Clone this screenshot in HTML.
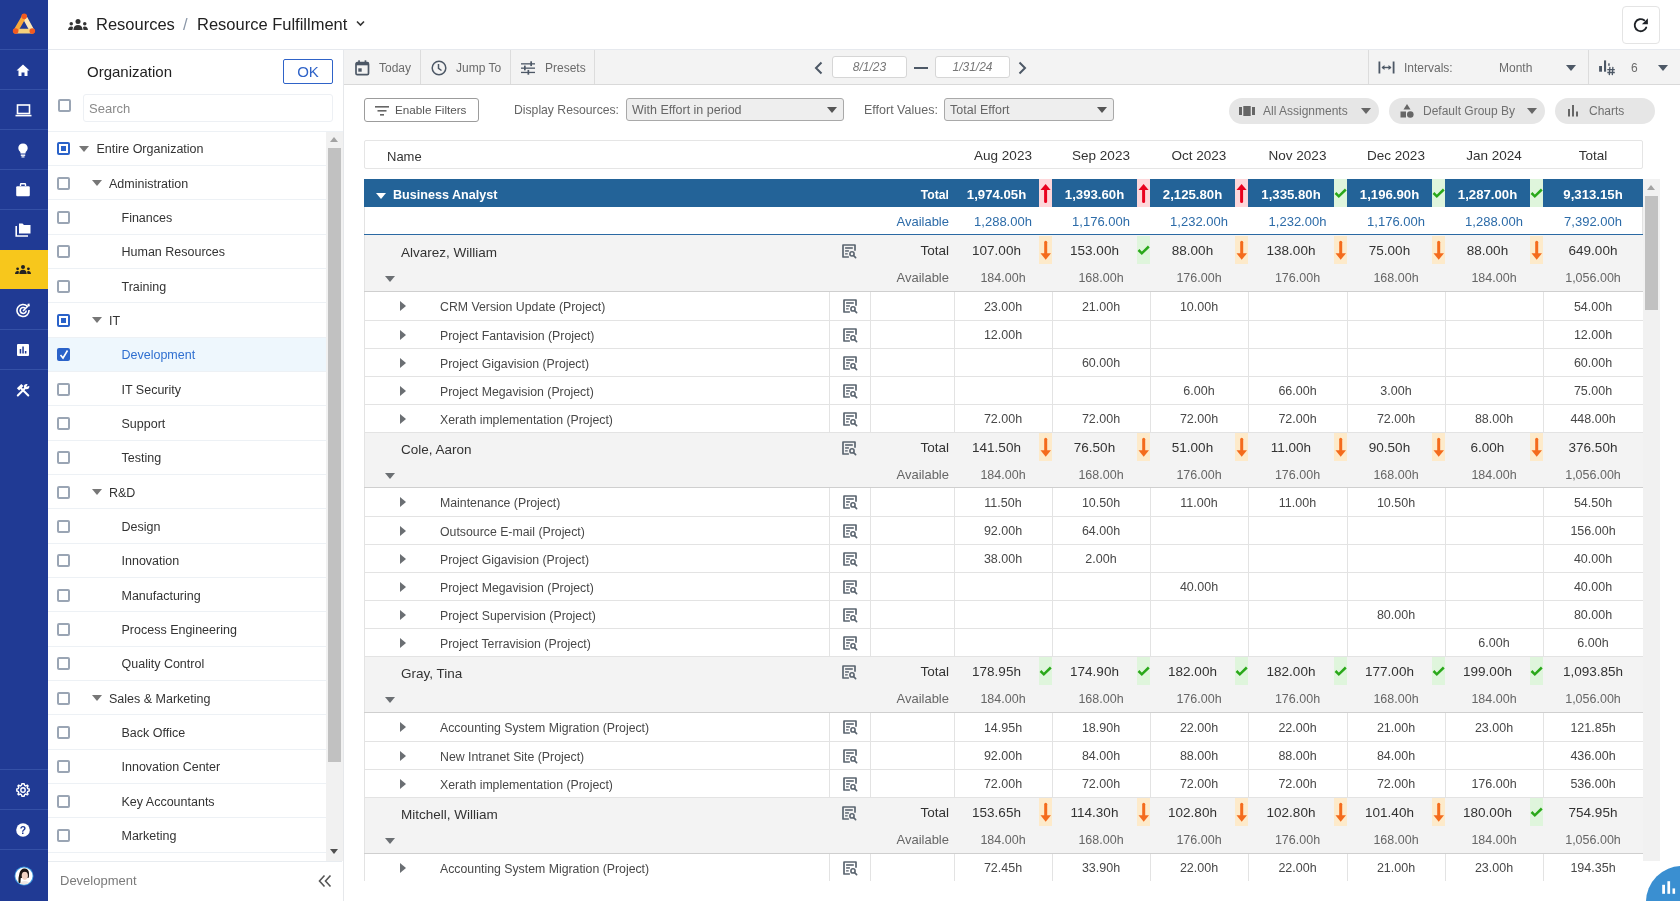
<!DOCTYPE html><html><head><meta charset="utf-8"><style>
*{box-sizing:border-box;margin:0;padding:0}
html,body{width:1680px;height:901px;overflow:hidden;background:#fff;font-family:"Liberation Sans", sans-serif;color:#333}
.a{position:absolute}
.nav{left:0;top:0;width:48px;height:901px;background:#203a94}
.nsep{left:0;width:48px;height:1px;background:#3450a6}
.hdr{left:48px;top:0;width:1632px;height:50px;border-bottom:1px solid #e6e9ee;background:#fff}
.org{left:48px;top:50px;width:296px;height:851px;background:#fff;border-right:1px solid #e6e8eb}
.trow{left:48px;width:278px;height:35px;border-bottom:1px solid #edf1f5}
.cb{width:13px;height:13px;border:2px solid #9aa5b4;border-radius:2px;background:#fff}
.tl{font-size:12.5px;color:#3a3a3a;white-space:nowrap}
.tri{width:0;height:0;border-left:5px solid transparent;border-right:5px solid transparent;border-top:6px solid #777}
.tb{left:344px;top:50px;width:1336px;height:35px;background:#f3f3f3;border-bottom:1px solid #d9d9d9}
.vsep{width:1px;background:#dcdcdc}
.tbt{font-size:12px;color:#6b6b6b;white-space:nowrap}
.cell{white-space:nowrap;text-align:center}
</style></head><body><div id="root" style="position:absolute;left:0;top:0;width:1680px;height:901px;overflow:hidden;background:#fff;will-change:transform"><div class="a nav"></div>
<div class="a nsep" style="top:49px"></div>
<div class="a nsep" style="top:89px"></div>
<div class="a nsep" style="top:129px"></div>
<div class="a nsep" style="top:169px"></div>
<div class="a nsep" style="top:209px"></div>
<div class="a nsep" style="top:329px"></div>
<div class="a nsep" style="top:369px"></div>
<div class="a nsep" style="top:769px"></div>
<div class="a nsep" style="top:809px"></div>
<div class="a nsep" style="top:849px"></div>
<div class="a" style="left:0;top:250px;width:48px;height:39px;background:#f7c71c"></div>
<svg class="a" style="left:12px;top:12px" width="24" height="24" viewBox="0 0 24 24">
<path d="M12.2 4.3 L20.3 19.1" stroke="#fbe7b8" stroke-width="4.6" stroke-linecap="round"/>
<path d="M3.6 19.1 L20.3 19.1" stroke="#f4d07c" stroke-width="4.6" stroke-linecap="round"/>
<path d="M12.2 4.3 L3.6 19.1" stroke="#f8a93a" stroke-width="4.6" stroke-linecap="round"/>
<circle cx="12.2" cy="4.3" r="2.8" fill="#f15a1f"/><circle cx="3.6" cy="19.1" r="2.8" fill="#f15a1f"/><circle cx="20.3" cy="19.1" r="2.8" fill="#f15a1f"/>
</svg>
<svg class="a" style="left:16px;top:64px" width="14" height="13" viewBox="0 0 14 13"><path d="M7 0.5 L13.5 6.5 L11.5 6.5 L11.5 12 L8.5 12 L8.5 8.5 L5.5 8.5 L5.5 12 L2.5 12 L2.5 6.5 L0.5 6.5 Z" fill="#fff"/></svg>
<svg class="a" style="left:15px;top:104px" width="17" height="13" viewBox="0 0 17 13"><rect x="2.5" y="1" width="12" height="8.5" fill="none" stroke="#fff" stroke-width="1.6"/><rect x="0.5" y="10.8" width="16" height="1.6" fill="#fff"/></svg>
<svg class="a" style="left:18px;top:143px" width="10" height="15" viewBox="0 0 10 15"><path d="M5 0.5 C2.2 0.5 0.3 2.6 0.3 5 C0.3 7 1.5 8 2.3 9 L2.5 10.5 L7.5 10.5 L7.7 9 C8.5 8 9.7 7 9.7 5 C9.7 2.6 7.8 0.5 5 0.5 Z" fill="#fff"/><rect x="2.8" y="11.5" width="4.4" height="1.4" fill="#fff"/><rect x="3.5" y="13.3" width="3" height="1.2" fill="#fff"/></svg>
<svg class="a" style="left:16px;top:183px" width="14" height="14" viewBox="0 0 14 14"><path d="M4.5 3 L4.5 1.5 Q4.5 0.8 5.2 0.8 L8.8 0.8 Q9.5 0.8 9.5 1.5 L9.5 3" fill="none" stroke="#fff" stroke-width="1.4"/><rect x="0.2" y="3.2" width="13.6" height="10" rx="1.2" fill="#fff"/></svg>
<svg class="a" style="left:15px;top:223px" width="16" height="14" viewBox="0 0 16 14"><path d="M4 0.5 L7.5 0.5 L9 2 L15.5 2 L15.5 10.5 L4 10.5 Z" fill="#fff"/><path d="M1.2 3 L1.2 13 L13 13" fill="none" stroke="#fff" stroke-width="1.6"/></svg>
<svg class="a" style="left:15px;top:265px" width="16.0" height="9.0" viewBox="0 0 16 9"><circle cx="8" cy="2" r="2" fill="#222"/><path d="M4.3 9 Q4.5 4.8 8 4.8 Q11.5 4.8 11.7 9 Z" fill="#222"/><circle cx="2.6" cy="3.8" r="1.4" fill="#222"/><path d="M0 9 Q0.2 6 2.6 6 Q3.8 6 4 6.8 L3.5 9 Z" fill="#222"/><circle cx="13.4" cy="3.8" r="1.4" fill="#222"/><path d="M16 9 Q15.8 6 13.4 6 Q12.2 6 12 6.8 L12.5 9 Z" fill="#222"/></svg>
<svg class="a" style="left:16px;top:303px" width="15" height="15" viewBox="0 0 15 15"><path d="M11.5 3.5 A6 6 0 1 0 13 7" fill="none" stroke="#fff" stroke-width="1.6"/><path d="M9.3 5.3 A3 3 0 1 0 10.2 7.5" fill="none" stroke="#fff" stroke-width="1.6"/><path d="M7 8 L13 2" stroke="#fff" stroke-width="1.6"/><path d="M11 1 L13.5 0.5 L13.8 3.8 Z" fill="#fff"/></svg>
<svg class="a" style="left:17px;top:344px" width="12" height="12" viewBox="0 0 12 12"><rect x="0" y="0" width="12" height="12" rx="1" fill="#fff"/><rect x="2.7" y="5" width="1.5" height="4.5" fill="#203a94"/><rect x="5.3" y="2.5" width="1.5" height="7" fill="#203a94"/><rect x="7.9" y="7" width="1.5" height="2.5" fill="#203a94"/></svg>
<svg class="a" style="left:16px;top:383px" width="14" height="14" viewBox="0 0 14 14"><path d="M1.8 12.5 L9.5 4.8" stroke="#fff" stroke-width="2" stroke-linecap="round"/><circle cx="10.6" cy="3.6" r="2.7" fill="#fff"/><path d="M10.2 3.9 L12.5 -0.5 L15 2 Z" fill="#203a94"/><path d="M12.3 12.5 L5 5.2" stroke="#fff" stroke-width="2" stroke-linecap="round"/><path d="M5.3 0.9 L7.5 3.1 L3.1 7.5 L0.9 5.3 Z" fill="#fff"/></svg>
<svg class="a" style="left:16px;top:783px" width="14" height="14" viewBox="0 0 14 14"><path d="M7 0.8 L8.2 0.8 L8.6 2.4 L9.9 3 L11.3 2.1 L12.1 2.9 L11.2 4.3 L11.8 5.6 L13.2 6 L13.2 8 L11.8 8.4 L11.2 9.7 L12.1 11.1 L11.3 11.9 L9.9 11 L8.6 11.6 L8.2 13.2 L5.8 13.2 L5.4 11.6 L4.1 11 L2.7 11.9 L1.9 11.1 L2.8 9.7 L2.2 8.4 L0.8 8 L0.8 6 L2.2 5.6 L2.8 4.3 L1.9 2.9 L2.7 2.1 L4.1 3 L5.4 2.4 L5.8 0.8 Z" fill="none" stroke="#fff" stroke-width="1.4" stroke-linejoin="round"/><circle cx="7" cy="7" r="2.2" fill="none" stroke="#fff" stroke-width="1.4"/></svg>
<svg class="a" style="left:16px;top:823px" width="14" height="14" viewBox="0 0 14 14"><circle cx="7" cy="7" r="6.8" fill="#fff"/><text x="7" y="11" text-anchor="middle" font-family="Liberation Sans" font-weight="bold" font-size="10.5" fill="#203a94">?</text></svg>
<svg class="a" style="left:14px;top:866px" width="20" height="20" viewBox="0 0 20 20"><defs><clipPath id="avc"><circle cx="10" cy="10" r="8.6"/></clipPath></defs><circle cx="10" cy="10" r="9.5" fill="#3d9ae0"/><circle cx="10" cy="10" r="8.6" fill="#fff"/><g clip-path="url(#avc)"><path d="M4.5 17 Q4 12 5.5 7 Q7 2.3 10.5 2.5 Q14.5 2.7 15 7 Q15.3 10 14.5 12 L6.8 12 Q6.5 15 6.5 17 Z" fill="#1d1816"/><ellipse cx="10.8" cy="9.8" rx="3.1" ry="4.1" fill="#f1d3c2"/><path d="M7.2 6.5 Q10 4 14 6.5 Q12 4.6 10.5 4.6 Q8.3 4.6 7.2 6.5 Z" fill="#1d1816"/><path d="M5 20 Q6 15 10.8 15 Q15.5 15 16.5 20 Z" fill="#efe7e2"/></g></svg>
<div class="a hdr"></div>
<svg class="a" style="left:68px;top:19px" width="20.0" height="11.25" viewBox="0 0 16 9"><circle cx="8" cy="2" r="2" fill="#333"/><path d="M4.3 9 Q4.5 4.8 8 4.8 Q11.5 4.8 11.7 9 Z" fill="#333"/><circle cx="2.6" cy="3.8" r="1.4" fill="#333"/><path d="M0 9 Q0.2 6 2.6 6 Q3.8 6 4 6.8 L3.5 9 Z" fill="#333"/><circle cx="13.4" cy="3.8" r="1.4" fill="#333"/><path d="M16 9 Q15.8 6 13.4 6 Q12.2 6 12 6.8 L12.5 9 Z" fill="#333"/></svg>
<div class="a" style="left:96px;top:15px;font-size:16.5px;color:#222;white-space:nowrap">Resources</div>
<div class="a" style="left:183px;top:15px;font-size:16.5px;color:#8b97a8">/</div>
<div class="a" style="left:197px;top:15px;font-size:16.5px;color:#222;white-space:nowrap">Resource Fulfillment</div>
<svg class="a" style="left:356px;top:20px" width="9" height="7" viewBox="0 0 9 7"><path d="M1 1.5 L4.5 5 L8 1.5" fill="none" stroke="#333" stroke-width="1.6"/></svg>
<div class="a" style="left:1622px;top:6px;width:38px;height:38px;border:1px solid #e4e4e4;border-radius:4px;background:#fff"></div>
<svg class="a" style="left:1632px;top:16px" width="18" height="18" viewBox="0 0 18 18"><path d="M12.2 4.3 A6 6 0 1 0 14.2 11.6" fill="none" stroke="#1f2328" stroke-width="1.9" stroke-linecap="round"/><path d="M15.9 2.3 L15.9 8.3 L9.9 8.3 Z" fill="#1f2328"/></svg>
<div class="a org"></div>
<div class="a" style="left:87px;top:63px;font-size:15px;color:#222;white-space:nowrap">Organization</div>
<div class="a" style="left:283px;top:59px;width:50px;height:25px;border:1px solid #2f63c8;border-radius:2px;color:#2f63c8;font-size:15px;text-align:center;line-height:23px">OK</div>
<div class="a cb" style="left:58px;top:99px"></div>
<div class="a" style="left:83px;top:94px;width:250px;height:28px;border:1px solid #edf0f4;border-radius:3px"></div>
<div class="a" style="left:89px;top:101px;font-size:13px;color:#8a8a8a">Search</div>
<div class="a" style="left:48px;top:131px;width:295px;height:1px;background:#edf1f5"></div>
<div class="a" style="left:48px;top:131.50px;width:278px;height:34.35px;background:#fff;border-bottom:1px solid #edf1f5"></div>
<div class="a" style="left:57px;top:142.18px;width:13px;height:13px;border:2px solid #2a62c9;border-radius:2px;background:#fff"><div style="position:absolute;left:2px;top:2px;width:5px;height:5px;background:#2a62c9"></div></div>
<div class="a tri" style="left:79px;top:145.68px;border-top-color:#777"></div>
<div class="a tl" style="left:96.5px;top:141.18px;line-height:16px;color:#333">Entire Organization</div>
<div class="a" style="left:48px;top:165.85px;width:278px;height:34.35px;background:#fff;border-bottom:1px solid #edf1f5"></div>
<div class="a cb" style="left:57px;top:176.53px"></div>
<div class="a tri" style="left:92px;top:180.03px;border-top-color:#777"></div>
<div class="a tl" style="left:109px;top:175.53px;line-height:16px;color:#333">Administration</div>
<div class="a" style="left:48px;top:200.20px;width:278px;height:34.35px;background:#fff;border-bottom:1px solid #edf1f5"></div>
<div class="a cb" style="left:57px;top:210.88px"></div>
<div class="a tl" style="left:121.5px;top:209.88px;line-height:16px;color:#333">Finances</div>
<div class="a" style="left:48px;top:234.55px;width:278px;height:34.35px;background:#fff;border-bottom:1px solid #edf1f5"></div>
<div class="a cb" style="left:57px;top:245.23px"></div>
<div class="a tl" style="left:121.5px;top:244.23px;line-height:16px;color:#333">Human Resources</div>
<div class="a" style="left:48px;top:268.90px;width:278px;height:34.35px;background:#fff;border-bottom:1px solid #edf1f5"></div>
<div class="a cb" style="left:57px;top:279.57px"></div>
<div class="a tl" style="left:121.5px;top:278.57px;line-height:16px;color:#333">Training</div>
<div class="a" style="left:48px;top:303.25px;width:278px;height:34.35px;background:#fff;border-bottom:1px solid #edf1f5"></div>
<div class="a" style="left:57px;top:313.93px;width:13px;height:13px;border:2px solid #2a62c9;border-radius:2px;background:#fff"><div style="position:absolute;left:2px;top:2px;width:5px;height:5px;background:#2a62c9"></div></div>
<div class="a tri" style="left:92px;top:317.43px;border-top-color:#777"></div>
<div class="a tl" style="left:109px;top:312.93px;line-height:16px;color:#333">IT</div>
<div class="a" style="left:48px;top:337.60px;width:278px;height:34.35px;background:#eef7fd;border-bottom:1px solid #edf1f5"></div>
<div class="a" style="left:57px;top:348.28px;width:13px;height:13px;border-radius:2px;background:#2a62c9"><svg style="position:absolute;left:2px;top:1px" width="10" height="11" viewBox="0 0 10 11"><path d="M1.5 6 L4 9 L8.5 1.5" fill="none" stroke="#fff" stroke-width="1.6"/></svg></div>
<div class="a tl" style="left:121.5px;top:347.28px;line-height:16px;color:#2f6fd0">Development</div>
<div class="a" style="left:48px;top:371.95px;width:278px;height:34.35px;background:#fff;border-bottom:1px solid #edf1f5"></div>
<div class="a cb" style="left:57px;top:382.63px"></div>
<div class="a tl" style="left:121.5px;top:381.63px;line-height:16px;color:#333">IT Security</div>
<div class="a" style="left:48px;top:406.30px;width:278px;height:34.35px;background:#fff;border-bottom:1px solid #edf1f5"></div>
<div class="a cb" style="left:57px;top:416.98px"></div>
<div class="a tl" style="left:121.5px;top:415.98px;line-height:16px;color:#333">Support</div>
<div class="a" style="left:48px;top:440.65px;width:278px;height:34.35px;background:#fff;border-bottom:1px solid #edf1f5"></div>
<div class="a cb" style="left:57px;top:451.33px"></div>
<div class="a tl" style="left:121.5px;top:450.33px;line-height:16px;color:#333">Testing</div>
<div class="a" style="left:48px;top:475.00px;width:278px;height:34.35px;background:#fff;border-bottom:1px solid #edf1f5"></div>
<div class="a cb" style="left:57px;top:485.68px"></div>
<div class="a tri" style="left:92px;top:489.18px;border-top-color:#777"></div>
<div class="a tl" style="left:109px;top:484.68px;line-height:16px;color:#333">R&amp;D</div>
<div class="a" style="left:48px;top:509.35px;width:278px;height:34.35px;background:#fff;border-bottom:1px solid #edf1f5"></div>
<div class="a cb" style="left:57px;top:520.02px"></div>
<div class="a tl" style="left:121.5px;top:519.02px;line-height:16px;color:#333">Design</div>
<div class="a" style="left:48px;top:543.70px;width:278px;height:34.35px;background:#fff;border-bottom:1px solid #edf1f5"></div>
<div class="a cb" style="left:57px;top:554.38px"></div>
<div class="a tl" style="left:121.5px;top:553.38px;line-height:16px;color:#333">Innovation</div>
<div class="a" style="left:48px;top:578.05px;width:278px;height:34.35px;background:#fff;border-bottom:1px solid #edf1f5"></div>
<div class="a cb" style="left:57px;top:588.72px"></div>
<div class="a tl" style="left:121.5px;top:587.72px;line-height:16px;color:#333">Manufacturing</div>
<div class="a" style="left:48px;top:612.40px;width:278px;height:34.35px;background:#fff;border-bottom:1px solid #edf1f5"></div>
<div class="a cb" style="left:57px;top:623.08px"></div>
<div class="a tl" style="left:121.5px;top:622.08px;line-height:16px;color:#333">Process Engineering</div>
<div class="a" style="left:48px;top:646.75px;width:278px;height:34.35px;background:#fff;border-bottom:1px solid #edf1f5"></div>
<div class="a cb" style="left:57px;top:657.42px"></div>
<div class="a tl" style="left:121.5px;top:656.42px;line-height:16px;color:#333">Quality Control</div>
<div class="a" style="left:48px;top:681.10px;width:278px;height:34.35px;background:#fff;border-bottom:1px solid #edf1f5"></div>
<div class="a cb" style="left:57px;top:691.77px"></div>
<div class="a tri" style="left:92px;top:695.27px;border-top-color:#777"></div>
<div class="a tl" style="left:109px;top:690.77px;line-height:16px;color:#333">Sales &amp; Marketing</div>
<div class="a" style="left:48px;top:715.45px;width:278px;height:34.35px;background:#fff;border-bottom:1px solid #edf1f5"></div>
<div class="a cb" style="left:57px;top:726.12px"></div>
<div class="a tl" style="left:121.5px;top:725.12px;line-height:16px;color:#333">Back Office</div>
<div class="a" style="left:48px;top:749.80px;width:278px;height:34.35px;background:#fff;border-bottom:1px solid #edf1f5"></div>
<div class="a cb" style="left:57px;top:760.48px"></div>
<div class="a tl" style="left:121.5px;top:759.48px;line-height:16px;color:#333">Innovation Center</div>
<div class="a" style="left:48px;top:784.15px;width:278px;height:34.35px;background:#fff;border-bottom:1px solid #edf1f5"></div>
<div class="a cb" style="left:57px;top:794.82px"></div>
<div class="a tl" style="left:121.5px;top:793.82px;line-height:16px;color:#333">Key Accountants</div>
<div class="a" style="left:48px;top:818.50px;width:278px;height:34.35px;background:#fff;border-bottom:1px solid #edf1f5"></div>
<div class="a cb" style="left:57px;top:829.17px"></div>
<div class="a tl" style="left:121.5px;top:828.17px;line-height:16px;color:#333">Marketing</div>
<div class="a" style="left:48px;top:852.85px;width:278px;height:34.35px;background:#fff;border-bottom:1px solid #edf1f5"></div>
<div class="a" style="left:326px;top:132px;width:17px;height:729px;background:#f1f1f1"></div>
<div class="a" style="left:328px;top:148px;width:13px;height:614px;background:#c1c1c1"></div>
<div class="a" style="left:330px;top:137px;width:0;height:0;border-left:4.5px solid transparent;border-right:4.5px solid transparent;border-bottom:5px solid #a3a3a3"></div>
<div class="a" style="left:330px;top:849px;width:0;height:0;border-left:4.5px solid transparent;border-right:4.5px solid transparent;border-top:5px solid #505050"></div>
<div class="a" style="left:48px;top:861px;width:294px;height:40px;background:#fff;border-top:1px solid #e8ecf0"></div>
<div class="a" style="left:60px;top:873px;font-size:13px;color:#7a7a7a">Development</div>
<svg class="a" style="left:318px;top:874px" width="14" height="14" viewBox="0 0 14 14"><path d="M6.5 1.5 L1.5 7 L6.5 12.5 M12.5 1.5 L7.5 7 L12.5 12.5" fill="none" stroke="#555" stroke-width="1.6"/></svg>
<div class="a tb"></div>
<div class="a vsep" style="left:420px;top:50px;height:34px"></div>
<div class="a vsep" style="left:510px;top:50px;height:34px"></div>
<div class="a vsep" style="left:594px;top:50px;height:34px"></div>
<div class="a vsep" style="left:1368px;top:50px;height:34px"></div>
<div class="a vsep" style="left:1588px;top:50px;height:34px"></div>
<svg class="a" style="left:355px;top:60px" width="15" height="16" viewBox="0 0 15 16"><rect x="1" y="2.7" width="12.5" height="12" rx="1.3" fill="none" stroke="#4d5866" stroke-width="1.7"/><rect x="1" y="2.7" width="12.5" height="2.6" fill="#4d5866"/><rect x="3.2" y="0.3" width="1.7" height="3" fill="#4d5866"/><rect x="9.6" y="0.3" width="1.7" height="3" fill="#4d5866"/><rect x="3.3" y="8.3" width="3.4" height="3.4" fill="#4d5866"/></svg>
<div class="a tbt" style="left:379px;top:61px">Today</div>
<svg class="a" style="left:431px;top:60px" width="16" height="16" viewBox="0 0 16 16"><circle cx="8" cy="8" r="6.8" fill="none" stroke="#4d5866" stroke-width="1.5"/><path d="M7.5 4 L7.5 8.3 L10.5 10.5" fill="none" stroke="#4d5866" stroke-width="1.5"/></svg>
<div class="a tbt" style="left:456px;top:61px">Jump To</div>
<svg class="a" style="left:521px;top:61px" width="15" height="14" viewBox="0 0 15 14"><rect x="0" y="2.2" width="14" height="1.3" fill="#4d5866"/><rect x="0" y="6.5" width="14" height="1.3" fill="#4d5866"/><rect x="0" y="10.8" width="14" height="1.3" fill="#4d5866"/><rect x="9.3" y="0.3" width="1.7" height="4.8" fill="#4d5866"/><rect x="3" y="4.6" width="1.7" height="4.8" fill="#4d5866"/><rect x="6.5" y="8.9" width="1.7" height="4.8" fill="#4d5866"/></svg>
<div class="a tbt" style="left:545px;top:61px">Presets</div>
<svg class="a" style="left:813px;top:61px" width="11" height="14" viewBox="0 0 11 14"><path d="M8.5 1.5 L3 7 L8.5 12.5" fill="none" stroke="#4d5866" stroke-width="2"/></svg>
<div class="a" style="left:832px;top:56px;width:75px;height:22px;background:#fff;border:1px solid #d6d6d6;border-radius:3px;font-size:12px;font-style:italic;color:#777;text-align:center;line-height:20px">8/1/23</div>
<div class="a" style="left:914px;top:67px;width:14px;height:2px;background:#4d5866"></div>
<div class="a" style="left:935px;top:56px;width:75px;height:22px;background:#fff;border:1px solid #d6d6d6;border-radius:3px;font-size:12px;font-style:italic;color:#777;text-align:center;line-height:20px">1/31/24</div>
<svg class="a" style="left:1017px;top:61px" width="11" height="14" viewBox="0 0 11 14"><path d="M2.5 1.5 L8 7 L2.5 12.5" fill="none" stroke="#4d5866" stroke-width="2"/></svg>
<svg class="a" style="left:1378px;top:61px" width="17" height="13" viewBox="0 0 17 13"><rect x="0.5" y="0.5" width="1.8" height="12" fill="#4d5866"/><rect x="14.7" y="0.5" width="1.8" height="12" fill="#4d5866"/><path d="M4 6.5 L13 6.5" stroke="#4d5866" stroke-width="1.4"/><path d="M3.5 6.5 L6.5 4 L6.5 9 Z M13.5 6.5 L10.5 4 L10.5 9 Z" fill="#4d5866"/></svg>
<div class="a tbt" style="left:1404px;top:61px">Intervals:</div>
<div class="a tbt" style="left:1499px;top:61px">Month</div>
<div class="a tri" style="left:1566px;top:65px;border-top-color:#4d5866"></div>
<svg class="a" style="left:1598px;top:60px" width="18" height="16" viewBox="0 0 18 16"><rect x="1.1" y="6" width="2.9" height="5.7" fill="#4d5866"/><rect x="6" y="0.4" width="2.1" height="11.3" fill="#4d5866"/><rect x="10.2" y="3.3" width="1.5" height="2.5" fill="#4d5866"/><path d="M9.3 9.7 L16.8 9.7 M9.3 12.5 L16.8 12.5 M11.9 6.9 L11.3 15.1 M14.9 6.9 L14.3 15.1" stroke="#4d5866" stroke-width="1.3"/></svg>
<div class="a tbt" style="left:1631px;top:61px">6</div>
<div class="a tri" style="left:1658px;top:65px;border-top-color:#4d5866"></div>
<div class="a" style="left:364px;top:98px;width:115px;height:24px;border:1px solid #9c9c9c;border-radius:3px;background:#fff"></div>
<svg class="a" style="left:375px;top:106px" width="14" height="10" viewBox="0 0 14 10"><rect x="0" y="0" width="14" height="1.6" fill="#666"/><rect x="2.5" y="4" width="9" height="1.6" fill="#666"/><rect x="5" y="8" width="4" height="1.6" fill="#666"/></svg>
<div class="a" style="left:395px;top:103px;font-size:11.7px;color:#555;white-space:nowrap">Enable Filters</div>
<div class="a" style="left:514px;top:103px;font-size:12.2px;color:#666;white-space:nowrap">Display Resources:</div>
<div class="a" style="left:626px;top:98px;width:218px;height:23px;border:1px solid #a9a9a9;border-radius:3px;background:#eeeeee"></div>
<div class="a" style="left:632px;top:103px;font-size:12.5px;color:#666;white-space:nowrap">With Effort in period</div>
<div class="a tri" style="left:827px;top:107px;border-top-color:#555"></div>
<div class="a" style="left:864px;top:103px;font-size:12.5px;color:#666;white-space:nowrap">Effort Values:</div>
<div class="a" style="left:944px;top:98px;width:170px;height:23px;border:1px solid #a9a9a9;border-radius:3px;background:#eeeeee"></div>
<div class="a" style="left:950px;top:103px;font-size:12.5px;color:#666;white-space:nowrap">Total Effort</div>
<div class="a tri" style="left:1097px;top:107px;border-top-color:#555"></div>
<div class="a" style="left:1229px;top:98px;width:150px;height:26px;border-radius:13px;background:#e6e6e6"></div>
<div class="a" style="left:1263px;top:104px;font-size:12px;color:#707070;white-space:nowrap">All Assignments</div>
<div class="a tri" style="left:1361px;top:108px;border-top-color:#666"></div>
<svg class="a" style="left:1239px;top:106px" width="16" height="10" viewBox="0 0 16 10"><rect x="0" y="1" width="3" height="8" fill="#666"/><rect x="4.3" y="0" width="7.4" height="10" fill="#666"/><rect x="13" y="1" width="3" height="8" fill="#666"/></svg>
<div class="a" style="left:1389px;top:98px;width:156px;height:26px;border-radius:13px;background:#e6e6e6"></div>
<div class="a" style="left:1423px;top:104px;font-size:12px;color:#707070;white-space:nowrap">Default Group By</div>
<div class="a tri" style="left:1527px;top:108px;border-top-color:#666"></div>
<svg class="a" style="left:1400px;top:104px" width="14" height="14" viewBox="0 0 14 14"><path d="M7 0 L10.5 5.5 L3.5 5.5 Z" fill="#666"/><rect x="0.5" y="7.5" width="5.5" height="6" fill="#666"/><circle cx="10.3" cy="10.5" r="3.3" fill="#666"/></svg>
<div class="a" style="left:1555px;top:98px;width:100px;height:26px;border-radius:13px;background:#e6e6e6"></div>
<div class="a" style="left:1589px;top:104px;font-size:12px;color:#707070;white-space:nowrap">Charts</div>
<svg class="a" style="left:1568px;top:105px" width="11" height="12" viewBox="0 0 11 12"><rect x="0" y="4" width="2" height="7.5" fill="#666"/><rect x="4" y="0" width="2" height="11.5" fill="#666"/><rect x="8" y="6.5" width="2" height="5" fill="#666"/></svg>
<div class="a" style="left:364px;top:140px;width:1279px;height:29px;border:1px solid #e5e5e5;border-radius:2px;background:#fff"></div>
<div class="a" style="left:387px;top:149px;font-size:13px;color:#333">Name</div>
<div class="a cell" style="left:954px;top:148px;width:98px;font-size:13.5px;color:#333">Aug 2023</div>
<div class="a cell" style="left:1052px;top:148px;width:98px;font-size:13.5px;color:#333">Sep 2023</div>
<div class="a cell" style="left:1150px;top:148px;width:98px;font-size:13.5px;color:#333">Oct 2023</div>
<div class="a cell" style="left:1248px;top:148px;width:99px;font-size:13.5px;color:#333">Nov 2023</div>
<div class="a cell" style="left:1347px;top:148px;width:98px;font-size:13.5px;color:#333">Dec 2023</div>
<div class="a cell" style="left:1445px;top:148px;width:98px;font-size:13.5px;color:#333">Jan 2024</div>
<div class="a cell" style="left:1543px;top:148px;width:100px;font-size:13.5px;color:#333">Total</div>
<div class="a" style="left:1643px;top:179px;width:17px;height:682px;background:#f1f1f1"></div>
<div class="a" style="left:1645px;top:196px;width:13px;height:114px;background:#c1c1c1"></div>
<div class="a" style="left:1647px;top:185px;width:0;height:0;border-left:4.5px solid transparent;border-right:4.5px solid transparent;border-bottom:5px solid #a3a3a3"></div>
<div class="a" style="left:1646px;top:866px;width:72px;height:72px;border-radius:50%;background:#3a8fd1"></div>
<svg class="a" style="left:1662px;top:881px" width="14" height="13" viewBox="0 0 14 13"><rect x="0.2" y="3.8" width="2.8" height="9" fill="#fff"/><rect x="5.4" y="0.2" width="2.7" height="12.6" fill="#fff"/><rect x="10.5" y="7.4" width="2.6" height="5.4" fill="#fff"/></svg>
<div class="a" style="left:364px;top:179px;width:1279px;height:28px;background:#236398"></div>
<div class="a" style="left:376px;top:193px;width:0;height:0;border-left:5px solid transparent;border-right:5px solid transparent;border-top:6px solid #fff"></div>
<div class="a" style="left:393px;top:187px;font-size:12.6px;font-weight:bold;color:#fff;white-space:nowrap;line-height:16px">Business Analyst</div>
<div class="a" style="left:870px;top:187px;width:79px;text-align:right;font-size:12.2px;font-weight:bold;color:#fff;line-height:16px">Total</div>
<div class="a cell" style="left:954px;top:186.5px;width:85px;font-size:13.2px;font-weight:bold;color:#fff;line-height:16px">1,974.05h</div>
<div class="a" style="left:1039px;top:179px;width:13px;height:28px;background:#fdd7da"><svg width="13" height="28" viewBox="0 0 13 28" style="position:absolute;left:0;top:0"><path d="M6.6 10 L6.6 22.6" stroke="#e9001d" stroke-width="3" stroke-linecap="round"/><path d="M1.5 11 L6.6 5 L11.6 11 Z" fill="#e9001d"/></svg></div>
<div class="a cell" style="left:1052px;top:186.5px;width:85px;font-size:13.2px;font-weight:bold;color:#fff;line-height:16px">1,393.60h</div>
<div class="a" style="left:1137px;top:179px;width:13px;height:28px;background:#fdd7da"><svg width="13" height="28" viewBox="0 0 13 28" style="position:absolute;left:0;top:0"><path d="M6.6 10 L6.6 22.6" stroke="#e9001d" stroke-width="3" stroke-linecap="round"/><path d="M1.5 11 L6.6 5 L11.6 11 Z" fill="#e9001d"/></svg></div>
<div class="a cell" style="left:1150px;top:186.5px;width:85px;font-size:13.2px;font-weight:bold;color:#fff;line-height:16px">2,125.80h</div>
<div class="a" style="left:1235px;top:179px;width:13px;height:28px;background:#fdd7da"><svg width="13" height="28" viewBox="0 0 13 28" style="position:absolute;left:0;top:0"><path d="M6.6 10 L6.6 22.6" stroke="#e9001d" stroke-width="3" stroke-linecap="round"/><path d="M1.5 11 L6.6 5 L11.6 11 Z" fill="#e9001d"/></svg></div>
<div class="a cell" style="left:1248px;top:186.5px;width:86px;font-size:13.2px;font-weight:bold;color:#fff;line-height:16px">1,335.80h</div>
<div class="a" style="left:1334px;top:179px;width:13px;height:28px;background:#dff5dc"><svg width="13" height="28" viewBox="0 0 13 28" style="position:absolute;left:0;top:0"><path d="M1.5 14 L4.8 17.3 L11.8 10.5" fill="none" stroke="#2aa81a" stroke-width="2.5"/></svg></div>
<div class="a cell" style="left:1347px;top:186.5px;width:85px;font-size:13.2px;font-weight:bold;color:#fff;line-height:16px">1,196.90h</div>
<div class="a" style="left:1432px;top:179px;width:13px;height:28px;background:#dff5dc"><svg width="13" height="28" viewBox="0 0 13 28" style="position:absolute;left:0;top:0"><path d="M1.5 14 L4.8 17.3 L11.8 10.5" fill="none" stroke="#2aa81a" stroke-width="2.5"/></svg></div>
<div class="a cell" style="left:1445px;top:186.5px;width:85px;font-size:13.2px;font-weight:bold;color:#fff;line-height:16px">1,287.00h</div>
<div class="a" style="left:1530px;top:179px;width:13px;height:28px;background:#dff5dc"><svg width="13" height="28" viewBox="0 0 13 28" style="position:absolute;left:0;top:0"><path d="M1.5 14 L4.8 17.3 L11.8 10.5" fill="none" stroke="#2aa81a" stroke-width="2.5"/></svg></div>
<div class="a cell" style="left:1543px;top:186.5px;width:100px;font-size:13.2px;font-weight:bold;color:#fff;line-height:16px">9,313.15h</div>
<div class="a" style="left:364px;top:207px;width:1px;height:27px;background:#e3e3e3"></div>
<div class="a" style="left:1642px;top:207px;width:1px;height:27px;background:#e3e3e3"></div>
<div class="a" style="left:364px;top:233.5px;width:1279px;height:1.5px;background:#2a69a3"></div>
<div class="a" style="left:870px;top:214px;width:79px;text-align:right;font-size:13px;color:#2c6ba8;line-height:16px">Available</div>
<div class="a cell" style="left:954px;top:214px;width:98px;font-size:13px;color:#2c6ba8;line-height:16px">1,288.00h</div>
<div class="a cell" style="left:1052px;top:214px;width:98px;font-size:13px;color:#2c6ba8;line-height:16px">1,176.00h</div>
<div class="a cell" style="left:1150px;top:214px;width:98px;font-size:13px;color:#2c6ba8;line-height:16px">1,232.00h</div>
<div class="a cell" style="left:1248px;top:214px;width:99px;font-size:13px;color:#2c6ba8;line-height:16px">1,232.00h</div>
<div class="a cell" style="left:1347px;top:214px;width:98px;font-size:13px;color:#2c6ba8;line-height:16px">1,176.00h</div>
<div class="a cell" style="left:1445px;top:214px;width:98px;font-size:13px;color:#2c6ba8;line-height:16px">1,288.00h</div>
<div class="a cell" style="left:1543px;top:214px;width:100px;font-size:13px;color:#2c6ba8;line-height:16px">7,392.00h</div>
<div class="a" style="left:364px;top:235px;width:1279px;height:56px;background:#f3f3f3"></div>
<div class="a" style="left:364px;top:291px;width:1279px;height:1px;background:#cfcfcf"></div>
<div class="a" style="left:364px;top:235px;width:1px;height:56px;background:#e3e3e3"></div>
<div class="a" style="left:401px;top:245px;font-size:13.5px;color:#333;white-space:nowrap;line-height:16px">Alvarez, William</div>
<div class="a tri" style="left:385px;top:276px;border-top-color:#6b6f73"></div>
<svg class="a" style="left:842px;top:244px" width="15" height="15" viewBox="0 0 15 15"><path d="M6.9 13 L1 13 L1 1 L13 1 L13 6.8" fill="none" stroke="#5b6570" stroke-width="1.7" stroke-linejoin="round"/><rect x="3.1" y="3.2" width="7.7" height="1.6" fill="#5b6570"/><rect x="3.1" y="6.2" width="3.8" height="1.5" fill="#5b6570"/><rect x="3.1" y="9.2" width="2.6" height="1.3" fill="#5b6570"/><circle cx="10" cy="9.9" r="2.1" fill="none" stroke="#5b6570" stroke-width="1.6"/><path d="M11.5 11.5 L13.6 13.6" stroke="#5b6570" stroke-width="1.7" stroke-linecap="round"/></svg>
<div class="a" style="left:870px;top:243px;width:79px;text-align:right;font-size:13.5px;color:#333;line-height:16px">Total</div>
<div class="a" style="left:870px;top:270px;width:79px;text-align:right;font-size:13px;color:#666;line-height:16px">Available</div>
<div class="a cell" style="left:954px;top:243px;width:85px;font-size:13.5px;color:#333;line-height:16px">107.00h</div>
<div class="a" style="left:1039px;top:236px;width:13px;height:28px;background:#fdeaca"><svg width="13" height="28" viewBox="0 0 13 28" style="position:absolute;left:0;top:0"><path d="M6.7 6.3 L6.7 18" stroke="#f46b1c" stroke-width="3" stroke-linecap="round"/><path d="M1.5 17.3 L6.7 23.8 L12 17.3 Z" fill="#f46b1c"/></svg></div>
<div class="a cell" style="left:1052px;top:243px;width:85px;font-size:13.5px;color:#333;line-height:16px">153.00h</div>
<div class="a" style="left:1137px;top:236px;width:13px;height:28px;background:#dff5dc"><svg width="13" height="28" viewBox="0 0 13 28" style="position:absolute;left:0;top:0"><path d="M1.5 14 L4.8 17.3 L11.8 10.5" fill="none" stroke="#2aa81a" stroke-width="2.5"/></svg></div>
<div class="a cell" style="left:1150px;top:243px;width:85px;font-size:13.5px;color:#333;line-height:16px">88.00h</div>
<div class="a" style="left:1235px;top:236px;width:13px;height:28px;background:#fdeaca"><svg width="13" height="28" viewBox="0 0 13 28" style="position:absolute;left:0;top:0"><path d="M6.7 6.3 L6.7 18" stroke="#f46b1c" stroke-width="3" stroke-linecap="round"/><path d="M1.5 17.3 L6.7 23.8 L12 17.3 Z" fill="#f46b1c"/></svg></div>
<div class="a cell" style="left:1248px;top:243px;width:86px;font-size:13.5px;color:#333;line-height:16px">138.00h</div>
<div class="a" style="left:1334px;top:236px;width:13px;height:28px;background:#fdeaca"><svg width="13" height="28" viewBox="0 0 13 28" style="position:absolute;left:0;top:0"><path d="M6.7 6.3 L6.7 18" stroke="#f46b1c" stroke-width="3" stroke-linecap="round"/><path d="M1.5 17.3 L6.7 23.8 L12 17.3 Z" fill="#f46b1c"/></svg></div>
<div class="a cell" style="left:1347px;top:243px;width:85px;font-size:13.5px;color:#333;line-height:16px">75.00h</div>
<div class="a" style="left:1432px;top:236px;width:13px;height:28px;background:#fdeaca"><svg width="13" height="28" viewBox="0 0 13 28" style="position:absolute;left:0;top:0"><path d="M6.7 6.3 L6.7 18" stroke="#f46b1c" stroke-width="3" stroke-linecap="round"/><path d="M1.5 17.3 L6.7 23.8 L12 17.3 Z" fill="#f46b1c"/></svg></div>
<div class="a cell" style="left:1445px;top:243px;width:85px;font-size:13.5px;color:#333;line-height:16px">88.00h</div>
<div class="a" style="left:1530px;top:236px;width:13px;height:28px;background:#fdeaca"><svg width="13" height="28" viewBox="0 0 13 28" style="position:absolute;left:0;top:0"><path d="M6.7 6.3 L6.7 18" stroke="#f46b1c" stroke-width="3" stroke-linecap="round"/><path d="M1.5 17.3 L6.7 23.8 L12 17.3 Z" fill="#f46b1c"/></svg></div>
<div class="a cell" style="left:1543px;top:243px;width:100px;font-size:13.5px;color:#333;line-height:16px">649.00h</div>
<div class="a cell" style="left:954px;top:270px;width:98px;font-size:12.5px;color:#666;line-height:16px">184.00h</div>
<div class="a cell" style="left:1052px;top:270px;width:98px;font-size:12.5px;color:#666;line-height:16px">168.00h</div>
<div class="a cell" style="left:1150px;top:270px;width:98px;font-size:12.5px;color:#666;line-height:16px">176.00h</div>
<div class="a cell" style="left:1248px;top:270px;width:99px;font-size:12.5px;color:#666;line-height:16px">176.00h</div>
<div class="a cell" style="left:1347px;top:270px;width:98px;font-size:12.5px;color:#666;line-height:16px">168.00h</div>
<div class="a cell" style="left:1445px;top:270px;width:98px;font-size:12.5px;color:#666;line-height:16px">184.00h</div>
<div class="a cell" style="left:1543px;top:270px;width:100px;font-size:12.5px;color:#666;line-height:16px">1,056.00h</div>
<div class="a" style="left:364px;top:320px;width:1279px;height:1px;background:#e3e3e3"></div>
<div class="a" style="left:364px;top:292px;width:1px;height:28px;background:#e3e3e3"></div>
<div class="a" style="left:829px;top:292px;width:1px;height:28px;background:#e3e3e3"></div>
<div class="a" style="left:870px;top:292px;width:1px;height:28px;background:#e3e3e3"></div>
<div class="a" style="left:954px;top:292px;width:1px;height:28px;background:#e3e3e3"></div>
<div class="a" style="left:1052px;top:292px;width:1px;height:28px;background:#e3e3e3"></div>
<div class="a" style="left:1150px;top:292px;width:1px;height:28px;background:#e3e3e3"></div>
<div class="a" style="left:1248px;top:292px;width:1px;height:28px;background:#e3e3e3"></div>
<div class="a" style="left:1347px;top:292px;width:1px;height:28px;background:#e3e3e3"></div>
<div class="a" style="left:1445px;top:292px;width:1px;height:28px;background:#e3e3e3"></div>
<div class="a" style="left:1543px;top:292px;width:1px;height:28px;background:#e3e3e3"></div>
<div class="a" style="left:400px;top:301.0px;width:0;height:0;border-top:5px solid transparent;border-bottom:5px solid transparent;border-left:6px solid #6b6f73"></div>
<div class="a" style="left:440px;top:299.0px;font-size:12.3px;color:#484848;white-space:nowrap;line-height:16px">CRM Version Update (Project)</div>
<svg class="a" style="left:843px;top:299.0px" width="15" height="15" viewBox="0 0 15 15"><path d="M6.9 13 L1 13 L1 1 L13 1 L13 6.8" fill="none" stroke="#5b6570" stroke-width="1.7" stroke-linejoin="round"/><rect x="3.1" y="3.2" width="7.7" height="1.6" fill="#5b6570"/><rect x="3.1" y="6.2" width="3.8" height="1.5" fill="#5b6570"/><rect x="3.1" y="9.2" width="2.6" height="1.3" fill="#5b6570"/><circle cx="10" cy="9.9" r="2.1" fill="none" stroke="#5b6570" stroke-width="1.6"/><path d="M11.5 11.5 L13.6 13.6" stroke="#5b6570" stroke-width="1.7" stroke-linecap="round"/></svg>
<div class="a cell" style="left:954px;top:298.5px;width:98px;font-size:12.5px;color:#484848;line-height:16px">23.00h</div>
<div class="a cell" style="left:1052px;top:298.5px;width:98px;font-size:12.5px;color:#484848;line-height:16px">21.00h</div>
<div class="a cell" style="left:1150px;top:298.5px;width:98px;font-size:12.5px;color:#484848;line-height:16px">10.00h</div>
<div class="a cell" style="left:1543px;top:298.5px;width:100px;font-size:12.5px;color:#484848;line-height:16px">54.00h</div>
<div class="a" style="left:364px;top:348px;width:1279px;height:1px;background:#e3e3e3"></div>
<div class="a" style="left:364px;top:321px;width:1px;height:27px;background:#e3e3e3"></div>
<div class="a" style="left:829px;top:321px;width:1px;height:27px;background:#e3e3e3"></div>
<div class="a" style="left:870px;top:321px;width:1px;height:27px;background:#e3e3e3"></div>
<div class="a" style="left:954px;top:321px;width:1px;height:27px;background:#e3e3e3"></div>
<div class="a" style="left:1052px;top:321px;width:1px;height:27px;background:#e3e3e3"></div>
<div class="a" style="left:1150px;top:321px;width:1px;height:27px;background:#e3e3e3"></div>
<div class="a" style="left:1248px;top:321px;width:1px;height:27px;background:#e3e3e3"></div>
<div class="a" style="left:1347px;top:321px;width:1px;height:27px;background:#e3e3e3"></div>
<div class="a" style="left:1445px;top:321px;width:1px;height:27px;background:#e3e3e3"></div>
<div class="a" style="left:1543px;top:321px;width:1px;height:27px;background:#e3e3e3"></div>
<div class="a" style="left:400px;top:329.5px;width:0;height:0;border-top:5px solid transparent;border-bottom:5px solid transparent;border-left:6px solid #6b6f73"></div>
<div class="a" style="left:440px;top:327.5px;font-size:12.3px;color:#484848;white-space:nowrap;line-height:16px">Project Fantavision (Project)</div>
<svg class="a" style="left:843px;top:327.5px" width="15" height="15" viewBox="0 0 15 15"><path d="M6.9 13 L1 13 L1 1 L13 1 L13 6.8" fill="none" stroke="#5b6570" stroke-width="1.7" stroke-linejoin="round"/><rect x="3.1" y="3.2" width="7.7" height="1.6" fill="#5b6570"/><rect x="3.1" y="6.2" width="3.8" height="1.5" fill="#5b6570"/><rect x="3.1" y="9.2" width="2.6" height="1.3" fill="#5b6570"/><circle cx="10" cy="9.9" r="2.1" fill="none" stroke="#5b6570" stroke-width="1.6"/><path d="M11.5 11.5 L13.6 13.6" stroke="#5b6570" stroke-width="1.7" stroke-linecap="round"/></svg>
<div class="a cell" style="left:954px;top:327.0px;width:98px;font-size:12.5px;color:#484848;line-height:16px">12.00h</div>
<div class="a cell" style="left:1543px;top:327.0px;width:100px;font-size:12.5px;color:#484848;line-height:16px">12.00h</div>
<div class="a" style="left:364px;top:376px;width:1279px;height:1px;background:#e3e3e3"></div>
<div class="a" style="left:364px;top:349px;width:1px;height:27px;background:#e3e3e3"></div>
<div class="a" style="left:829px;top:349px;width:1px;height:27px;background:#e3e3e3"></div>
<div class="a" style="left:870px;top:349px;width:1px;height:27px;background:#e3e3e3"></div>
<div class="a" style="left:954px;top:349px;width:1px;height:27px;background:#e3e3e3"></div>
<div class="a" style="left:1052px;top:349px;width:1px;height:27px;background:#e3e3e3"></div>
<div class="a" style="left:1150px;top:349px;width:1px;height:27px;background:#e3e3e3"></div>
<div class="a" style="left:1248px;top:349px;width:1px;height:27px;background:#e3e3e3"></div>
<div class="a" style="left:1347px;top:349px;width:1px;height:27px;background:#e3e3e3"></div>
<div class="a" style="left:1445px;top:349px;width:1px;height:27px;background:#e3e3e3"></div>
<div class="a" style="left:1543px;top:349px;width:1px;height:27px;background:#e3e3e3"></div>
<div class="a" style="left:400px;top:357.5px;width:0;height:0;border-top:5px solid transparent;border-bottom:5px solid transparent;border-left:6px solid #6b6f73"></div>
<div class="a" style="left:440px;top:355.5px;font-size:12.3px;color:#484848;white-space:nowrap;line-height:16px">Project Gigavision (Project)</div>
<svg class="a" style="left:843px;top:355.5px" width="15" height="15" viewBox="0 0 15 15"><path d="M6.9 13 L1 13 L1 1 L13 1 L13 6.8" fill="none" stroke="#5b6570" stroke-width="1.7" stroke-linejoin="round"/><rect x="3.1" y="3.2" width="7.7" height="1.6" fill="#5b6570"/><rect x="3.1" y="6.2" width="3.8" height="1.5" fill="#5b6570"/><rect x="3.1" y="9.2" width="2.6" height="1.3" fill="#5b6570"/><circle cx="10" cy="9.9" r="2.1" fill="none" stroke="#5b6570" stroke-width="1.6"/><path d="M11.5 11.5 L13.6 13.6" stroke="#5b6570" stroke-width="1.7" stroke-linecap="round"/></svg>
<div class="a cell" style="left:1052px;top:355.0px;width:98px;font-size:12.5px;color:#484848;line-height:16px">60.00h</div>
<div class="a cell" style="left:1543px;top:355.0px;width:100px;font-size:12.5px;color:#484848;line-height:16px">60.00h</div>
<div class="a" style="left:364px;top:404px;width:1279px;height:1px;background:#e3e3e3"></div>
<div class="a" style="left:364px;top:377px;width:1px;height:27px;background:#e3e3e3"></div>
<div class="a" style="left:829px;top:377px;width:1px;height:27px;background:#e3e3e3"></div>
<div class="a" style="left:870px;top:377px;width:1px;height:27px;background:#e3e3e3"></div>
<div class="a" style="left:954px;top:377px;width:1px;height:27px;background:#e3e3e3"></div>
<div class="a" style="left:1052px;top:377px;width:1px;height:27px;background:#e3e3e3"></div>
<div class="a" style="left:1150px;top:377px;width:1px;height:27px;background:#e3e3e3"></div>
<div class="a" style="left:1248px;top:377px;width:1px;height:27px;background:#e3e3e3"></div>
<div class="a" style="left:1347px;top:377px;width:1px;height:27px;background:#e3e3e3"></div>
<div class="a" style="left:1445px;top:377px;width:1px;height:27px;background:#e3e3e3"></div>
<div class="a" style="left:1543px;top:377px;width:1px;height:27px;background:#e3e3e3"></div>
<div class="a" style="left:400px;top:385.5px;width:0;height:0;border-top:5px solid transparent;border-bottom:5px solid transparent;border-left:6px solid #6b6f73"></div>
<div class="a" style="left:440px;top:383.5px;font-size:12.3px;color:#484848;white-space:nowrap;line-height:16px">Project Megavision (Project)</div>
<svg class="a" style="left:843px;top:383.5px" width="15" height="15" viewBox="0 0 15 15"><path d="M6.9 13 L1 13 L1 1 L13 1 L13 6.8" fill="none" stroke="#5b6570" stroke-width="1.7" stroke-linejoin="round"/><rect x="3.1" y="3.2" width="7.7" height="1.6" fill="#5b6570"/><rect x="3.1" y="6.2" width="3.8" height="1.5" fill="#5b6570"/><rect x="3.1" y="9.2" width="2.6" height="1.3" fill="#5b6570"/><circle cx="10" cy="9.9" r="2.1" fill="none" stroke="#5b6570" stroke-width="1.6"/><path d="M11.5 11.5 L13.6 13.6" stroke="#5b6570" stroke-width="1.7" stroke-linecap="round"/></svg>
<div class="a cell" style="left:1150px;top:383.0px;width:98px;font-size:12.5px;color:#484848;line-height:16px">6.00h</div>
<div class="a cell" style="left:1248px;top:383.0px;width:99px;font-size:12.5px;color:#484848;line-height:16px">66.00h</div>
<div class="a cell" style="left:1347px;top:383.0px;width:98px;font-size:12.5px;color:#484848;line-height:16px">3.00h</div>
<div class="a cell" style="left:1543px;top:383.0px;width:100px;font-size:12.5px;color:#484848;line-height:16px">75.00h</div>
<div class="a" style="left:364px;top:432px;width:1279px;height:1px;background:#e3e3e3"></div>
<div class="a" style="left:364px;top:405px;width:1px;height:27px;background:#e3e3e3"></div>
<div class="a" style="left:829px;top:405px;width:1px;height:27px;background:#e3e3e3"></div>
<div class="a" style="left:870px;top:405px;width:1px;height:27px;background:#e3e3e3"></div>
<div class="a" style="left:954px;top:405px;width:1px;height:27px;background:#e3e3e3"></div>
<div class="a" style="left:1052px;top:405px;width:1px;height:27px;background:#e3e3e3"></div>
<div class="a" style="left:1150px;top:405px;width:1px;height:27px;background:#e3e3e3"></div>
<div class="a" style="left:1248px;top:405px;width:1px;height:27px;background:#e3e3e3"></div>
<div class="a" style="left:1347px;top:405px;width:1px;height:27px;background:#e3e3e3"></div>
<div class="a" style="left:1445px;top:405px;width:1px;height:27px;background:#e3e3e3"></div>
<div class="a" style="left:1543px;top:405px;width:1px;height:27px;background:#e3e3e3"></div>
<div class="a" style="left:400px;top:413.5px;width:0;height:0;border-top:5px solid transparent;border-bottom:5px solid transparent;border-left:6px solid #6b6f73"></div>
<div class="a" style="left:440px;top:411.5px;font-size:12.3px;color:#484848;white-space:nowrap;line-height:16px">Xerath implementation (Project)</div>
<svg class="a" style="left:843px;top:411.5px" width="15" height="15" viewBox="0 0 15 15"><path d="M6.9 13 L1 13 L1 1 L13 1 L13 6.8" fill="none" stroke="#5b6570" stroke-width="1.7" stroke-linejoin="round"/><rect x="3.1" y="3.2" width="7.7" height="1.6" fill="#5b6570"/><rect x="3.1" y="6.2" width="3.8" height="1.5" fill="#5b6570"/><rect x="3.1" y="9.2" width="2.6" height="1.3" fill="#5b6570"/><circle cx="10" cy="9.9" r="2.1" fill="none" stroke="#5b6570" stroke-width="1.6"/><path d="M11.5 11.5 L13.6 13.6" stroke="#5b6570" stroke-width="1.7" stroke-linecap="round"/></svg>
<div class="a cell" style="left:954px;top:411.0px;width:98px;font-size:12.5px;color:#484848;line-height:16px">72.00h</div>
<div class="a cell" style="left:1052px;top:411.0px;width:98px;font-size:12.5px;color:#484848;line-height:16px">72.00h</div>
<div class="a cell" style="left:1150px;top:411.0px;width:98px;font-size:12.5px;color:#484848;line-height:16px">72.00h</div>
<div class="a cell" style="left:1248px;top:411.0px;width:99px;font-size:12.5px;color:#484848;line-height:16px">72.00h</div>
<div class="a cell" style="left:1347px;top:411.0px;width:98px;font-size:12.5px;color:#484848;line-height:16px">72.00h</div>
<div class="a cell" style="left:1445px;top:411.0px;width:98px;font-size:12.5px;color:#484848;line-height:16px">88.00h</div>
<div class="a cell" style="left:1543px;top:411.0px;width:100px;font-size:12.5px;color:#484848;line-height:16px">448.00h</div>
<div class="a" style="left:364px;top:433px;width:1279px;height:54px;background:#f3f3f3"></div>
<div class="a" style="left:364px;top:487px;width:1279px;height:1px;background:#cfcfcf"></div>
<div class="a" style="left:364px;top:433px;width:1px;height:54px;background:#e3e3e3"></div>
<div class="a" style="left:401px;top:442px;font-size:13.5px;color:#333;white-space:nowrap;line-height:16px">Cole, Aaron</div>
<div class="a tri" style="left:385px;top:473px;border-top-color:#6b6f73"></div>
<svg class="a" style="left:842px;top:441px" width="15" height="15" viewBox="0 0 15 15"><path d="M6.9 13 L1 13 L1 1 L13 1 L13 6.8" fill="none" stroke="#5b6570" stroke-width="1.7" stroke-linejoin="round"/><rect x="3.1" y="3.2" width="7.7" height="1.6" fill="#5b6570"/><rect x="3.1" y="6.2" width="3.8" height="1.5" fill="#5b6570"/><rect x="3.1" y="9.2" width="2.6" height="1.3" fill="#5b6570"/><circle cx="10" cy="9.9" r="2.1" fill="none" stroke="#5b6570" stroke-width="1.6"/><path d="M11.5 11.5 L13.6 13.6" stroke="#5b6570" stroke-width="1.7" stroke-linecap="round"/></svg>
<div class="a" style="left:870px;top:440px;width:79px;text-align:right;font-size:13.5px;color:#333;line-height:16px">Total</div>
<div class="a" style="left:870px;top:467px;width:79px;text-align:right;font-size:13px;color:#666;line-height:16px">Available</div>
<div class="a cell" style="left:954px;top:440px;width:85px;font-size:13.5px;color:#333;line-height:16px">141.50h</div>
<div class="a" style="left:1039px;top:433px;width:13px;height:28px;background:#fdeaca"><svg width="13" height="28" viewBox="0 0 13 28" style="position:absolute;left:0;top:0"><path d="M6.7 6.3 L6.7 18" stroke="#f46b1c" stroke-width="3" stroke-linecap="round"/><path d="M1.5 17.3 L6.7 23.8 L12 17.3 Z" fill="#f46b1c"/></svg></div>
<div class="a cell" style="left:1052px;top:440px;width:85px;font-size:13.5px;color:#333;line-height:16px">76.50h</div>
<div class="a" style="left:1137px;top:433px;width:13px;height:28px;background:#fdeaca"><svg width="13" height="28" viewBox="0 0 13 28" style="position:absolute;left:0;top:0"><path d="M6.7 6.3 L6.7 18" stroke="#f46b1c" stroke-width="3" stroke-linecap="round"/><path d="M1.5 17.3 L6.7 23.8 L12 17.3 Z" fill="#f46b1c"/></svg></div>
<div class="a cell" style="left:1150px;top:440px;width:85px;font-size:13.5px;color:#333;line-height:16px">51.00h</div>
<div class="a" style="left:1235px;top:433px;width:13px;height:28px;background:#fdeaca"><svg width="13" height="28" viewBox="0 0 13 28" style="position:absolute;left:0;top:0"><path d="M6.7 6.3 L6.7 18" stroke="#f46b1c" stroke-width="3" stroke-linecap="round"/><path d="M1.5 17.3 L6.7 23.8 L12 17.3 Z" fill="#f46b1c"/></svg></div>
<div class="a cell" style="left:1248px;top:440px;width:86px;font-size:13.5px;color:#333;line-height:16px">11.00h</div>
<div class="a" style="left:1334px;top:433px;width:13px;height:28px;background:#fdeaca"><svg width="13" height="28" viewBox="0 0 13 28" style="position:absolute;left:0;top:0"><path d="M6.7 6.3 L6.7 18" stroke="#f46b1c" stroke-width="3" stroke-linecap="round"/><path d="M1.5 17.3 L6.7 23.8 L12 17.3 Z" fill="#f46b1c"/></svg></div>
<div class="a cell" style="left:1347px;top:440px;width:85px;font-size:13.5px;color:#333;line-height:16px">90.50h</div>
<div class="a" style="left:1432px;top:433px;width:13px;height:28px;background:#fdeaca"><svg width="13" height="28" viewBox="0 0 13 28" style="position:absolute;left:0;top:0"><path d="M6.7 6.3 L6.7 18" stroke="#f46b1c" stroke-width="3" stroke-linecap="round"/><path d="M1.5 17.3 L6.7 23.8 L12 17.3 Z" fill="#f46b1c"/></svg></div>
<div class="a cell" style="left:1445px;top:440px;width:85px;font-size:13.5px;color:#333;line-height:16px">6.00h</div>
<div class="a" style="left:1530px;top:433px;width:13px;height:28px;background:#fdeaca"><svg width="13" height="28" viewBox="0 0 13 28" style="position:absolute;left:0;top:0"><path d="M6.7 6.3 L6.7 18" stroke="#f46b1c" stroke-width="3" stroke-linecap="round"/><path d="M1.5 17.3 L6.7 23.8 L12 17.3 Z" fill="#f46b1c"/></svg></div>
<div class="a cell" style="left:1543px;top:440px;width:100px;font-size:13.5px;color:#333;line-height:16px">376.50h</div>
<div class="a cell" style="left:954px;top:467px;width:98px;font-size:12.5px;color:#666;line-height:16px">184.00h</div>
<div class="a cell" style="left:1052px;top:467px;width:98px;font-size:12.5px;color:#666;line-height:16px">168.00h</div>
<div class="a cell" style="left:1150px;top:467px;width:98px;font-size:12.5px;color:#666;line-height:16px">176.00h</div>
<div class="a cell" style="left:1248px;top:467px;width:99px;font-size:12.5px;color:#666;line-height:16px">176.00h</div>
<div class="a cell" style="left:1347px;top:467px;width:98px;font-size:12.5px;color:#666;line-height:16px">168.00h</div>
<div class="a cell" style="left:1445px;top:467px;width:98px;font-size:12.5px;color:#666;line-height:16px">184.00h</div>
<div class="a cell" style="left:1543px;top:467px;width:100px;font-size:12.5px;color:#666;line-height:16px">1,056.00h</div>
<div class="a" style="left:364px;top:516px;width:1279px;height:1px;background:#e3e3e3"></div>
<div class="a" style="left:364px;top:488px;width:1px;height:28px;background:#e3e3e3"></div>
<div class="a" style="left:829px;top:488px;width:1px;height:28px;background:#e3e3e3"></div>
<div class="a" style="left:870px;top:488px;width:1px;height:28px;background:#e3e3e3"></div>
<div class="a" style="left:954px;top:488px;width:1px;height:28px;background:#e3e3e3"></div>
<div class="a" style="left:1052px;top:488px;width:1px;height:28px;background:#e3e3e3"></div>
<div class="a" style="left:1150px;top:488px;width:1px;height:28px;background:#e3e3e3"></div>
<div class="a" style="left:1248px;top:488px;width:1px;height:28px;background:#e3e3e3"></div>
<div class="a" style="left:1347px;top:488px;width:1px;height:28px;background:#e3e3e3"></div>
<div class="a" style="left:1445px;top:488px;width:1px;height:28px;background:#e3e3e3"></div>
<div class="a" style="left:1543px;top:488px;width:1px;height:28px;background:#e3e3e3"></div>
<div class="a" style="left:400px;top:497.0px;width:0;height:0;border-top:5px solid transparent;border-bottom:5px solid transparent;border-left:6px solid #6b6f73"></div>
<div class="a" style="left:440px;top:495.0px;font-size:12.3px;color:#484848;white-space:nowrap;line-height:16px">Maintenance (Project)</div>
<svg class="a" style="left:843px;top:495.0px" width="15" height="15" viewBox="0 0 15 15"><path d="M6.9 13 L1 13 L1 1 L13 1 L13 6.8" fill="none" stroke="#5b6570" stroke-width="1.7" stroke-linejoin="round"/><rect x="3.1" y="3.2" width="7.7" height="1.6" fill="#5b6570"/><rect x="3.1" y="6.2" width="3.8" height="1.5" fill="#5b6570"/><rect x="3.1" y="9.2" width="2.6" height="1.3" fill="#5b6570"/><circle cx="10" cy="9.9" r="2.1" fill="none" stroke="#5b6570" stroke-width="1.6"/><path d="M11.5 11.5 L13.6 13.6" stroke="#5b6570" stroke-width="1.7" stroke-linecap="round"/></svg>
<div class="a cell" style="left:954px;top:494.5px;width:98px;font-size:12.5px;color:#484848;line-height:16px">11.50h</div>
<div class="a cell" style="left:1052px;top:494.5px;width:98px;font-size:12.5px;color:#484848;line-height:16px">10.50h</div>
<div class="a cell" style="left:1150px;top:494.5px;width:98px;font-size:12.5px;color:#484848;line-height:16px">11.00h</div>
<div class="a cell" style="left:1248px;top:494.5px;width:99px;font-size:12.5px;color:#484848;line-height:16px">11.00h</div>
<div class="a cell" style="left:1347px;top:494.5px;width:98px;font-size:12.5px;color:#484848;line-height:16px">10.50h</div>
<div class="a cell" style="left:1543px;top:494.5px;width:100px;font-size:12.5px;color:#484848;line-height:16px">54.50h</div>
<div class="a" style="left:364px;top:544px;width:1279px;height:1px;background:#e3e3e3"></div>
<div class="a" style="left:364px;top:517px;width:1px;height:27px;background:#e3e3e3"></div>
<div class="a" style="left:829px;top:517px;width:1px;height:27px;background:#e3e3e3"></div>
<div class="a" style="left:870px;top:517px;width:1px;height:27px;background:#e3e3e3"></div>
<div class="a" style="left:954px;top:517px;width:1px;height:27px;background:#e3e3e3"></div>
<div class="a" style="left:1052px;top:517px;width:1px;height:27px;background:#e3e3e3"></div>
<div class="a" style="left:1150px;top:517px;width:1px;height:27px;background:#e3e3e3"></div>
<div class="a" style="left:1248px;top:517px;width:1px;height:27px;background:#e3e3e3"></div>
<div class="a" style="left:1347px;top:517px;width:1px;height:27px;background:#e3e3e3"></div>
<div class="a" style="left:1445px;top:517px;width:1px;height:27px;background:#e3e3e3"></div>
<div class="a" style="left:1543px;top:517px;width:1px;height:27px;background:#e3e3e3"></div>
<div class="a" style="left:400px;top:525.5px;width:0;height:0;border-top:5px solid transparent;border-bottom:5px solid transparent;border-left:6px solid #6b6f73"></div>
<div class="a" style="left:440px;top:523.5px;font-size:12.3px;color:#484848;white-space:nowrap;line-height:16px">Outsource E-mail (Project)</div>
<svg class="a" style="left:843px;top:523.5px" width="15" height="15" viewBox="0 0 15 15"><path d="M6.9 13 L1 13 L1 1 L13 1 L13 6.8" fill="none" stroke="#5b6570" stroke-width="1.7" stroke-linejoin="round"/><rect x="3.1" y="3.2" width="7.7" height="1.6" fill="#5b6570"/><rect x="3.1" y="6.2" width="3.8" height="1.5" fill="#5b6570"/><rect x="3.1" y="9.2" width="2.6" height="1.3" fill="#5b6570"/><circle cx="10" cy="9.9" r="2.1" fill="none" stroke="#5b6570" stroke-width="1.6"/><path d="M11.5 11.5 L13.6 13.6" stroke="#5b6570" stroke-width="1.7" stroke-linecap="round"/></svg>
<div class="a cell" style="left:954px;top:523.0px;width:98px;font-size:12.5px;color:#484848;line-height:16px">92.00h</div>
<div class="a cell" style="left:1052px;top:523.0px;width:98px;font-size:12.5px;color:#484848;line-height:16px">64.00h</div>
<div class="a cell" style="left:1543px;top:523.0px;width:100px;font-size:12.5px;color:#484848;line-height:16px">156.00h</div>
<div class="a" style="left:364px;top:572px;width:1279px;height:1px;background:#e3e3e3"></div>
<div class="a" style="left:364px;top:545px;width:1px;height:27px;background:#e3e3e3"></div>
<div class="a" style="left:829px;top:545px;width:1px;height:27px;background:#e3e3e3"></div>
<div class="a" style="left:870px;top:545px;width:1px;height:27px;background:#e3e3e3"></div>
<div class="a" style="left:954px;top:545px;width:1px;height:27px;background:#e3e3e3"></div>
<div class="a" style="left:1052px;top:545px;width:1px;height:27px;background:#e3e3e3"></div>
<div class="a" style="left:1150px;top:545px;width:1px;height:27px;background:#e3e3e3"></div>
<div class="a" style="left:1248px;top:545px;width:1px;height:27px;background:#e3e3e3"></div>
<div class="a" style="left:1347px;top:545px;width:1px;height:27px;background:#e3e3e3"></div>
<div class="a" style="left:1445px;top:545px;width:1px;height:27px;background:#e3e3e3"></div>
<div class="a" style="left:1543px;top:545px;width:1px;height:27px;background:#e3e3e3"></div>
<div class="a" style="left:400px;top:553.5px;width:0;height:0;border-top:5px solid transparent;border-bottom:5px solid transparent;border-left:6px solid #6b6f73"></div>
<div class="a" style="left:440px;top:551.5px;font-size:12.3px;color:#484848;white-space:nowrap;line-height:16px">Project Gigavision (Project)</div>
<svg class="a" style="left:843px;top:551.5px" width="15" height="15" viewBox="0 0 15 15"><path d="M6.9 13 L1 13 L1 1 L13 1 L13 6.8" fill="none" stroke="#5b6570" stroke-width="1.7" stroke-linejoin="round"/><rect x="3.1" y="3.2" width="7.7" height="1.6" fill="#5b6570"/><rect x="3.1" y="6.2" width="3.8" height="1.5" fill="#5b6570"/><rect x="3.1" y="9.2" width="2.6" height="1.3" fill="#5b6570"/><circle cx="10" cy="9.9" r="2.1" fill="none" stroke="#5b6570" stroke-width="1.6"/><path d="M11.5 11.5 L13.6 13.6" stroke="#5b6570" stroke-width="1.7" stroke-linecap="round"/></svg>
<div class="a cell" style="left:954px;top:551.0px;width:98px;font-size:12.5px;color:#484848;line-height:16px">38.00h</div>
<div class="a cell" style="left:1052px;top:551.0px;width:98px;font-size:12.5px;color:#484848;line-height:16px">2.00h</div>
<div class="a cell" style="left:1543px;top:551.0px;width:100px;font-size:12.5px;color:#484848;line-height:16px">40.00h</div>
<div class="a" style="left:364px;top:600px;width:1279px;height:1px;background:#e3e3e3"></div>
<div class="a" style="left:364px;top:573px;width:1px;height:27px;background:#e3e3e3"></div>
<div class="a" style="left:829px;top:573px;width:1px;height:27px;background:#e3e3e3"></div>
<div class="a" style="left:870px;top:573px;width:1px;height:27px;background:#e3e3e3"></div>
<div class="a" style="left:954px;top:573px;width:1px;height:27px;background:#e3e3e3"></div>
<div class="a" style="left:1052px;top:573px;width:1px;height:27px;background:#e3e3e3"></div>
<div class="a" style="left:1150px;top:573px;width:1px;height:27px;background:#e3e3e3"></div>
<div class="a" style="left:1248px;top:573px;width:1px;height:27px;background:#e3e3e3"></div>
<div class="a" style="left:1347px;top:573px;width:1px;height:27px;background:#e3e3e3"></div>
<div class="a" style="left:1445px;top:573px;width:1px;height:27px;background:#e3e3e3"></div>
<div class="a" style="left:1543px;top:573px;width:1px;height:27px;background:#e3e3e3"></div>
<div class="a" style="left:400px;top:581.5px;width:0;height:0;border-top:5px solid transparent;border-bottom:5px solid transparent;border-left:6px solid #6b6f73"></div>
<div class="a" style="left:440px;top:579.5px;font-size:12.3px;color:#484848;white-space:nowrap;line-height:16px">Project Megavision (Project)</div>
<svg class="a" style="left:843px;top:579.5px" width="15" height="15" viewBox="0 0 15 15"><path d="M6.9 13 L1 13 L1 1 L13 1 L13 6.8" fill="none" stroke="#5b6570" stroke-width="1.7" stroke-linejoin="round"/><rect x="3.1" y="3.2" width="7.7" height="1.6" fill="#5b6570"/><rect x="3.1" y="6.2" width="3.8" height="1.5" fill="#5b6570"/><rect x="3.1" y="9.2" width="2.6" height="1.3" fill="#5b6570"/><circle cx="10" cy="9.9" r="2.1" fill="none" stroke="#5b6570" stroke-width="1.6"/><path d="M11.5 11.5 L13.6 13.6" stroke="#5b6570" stroke-width="1.7" stroke-linecap="round"/></svg>
<div class="a cell" style="left:1150px;top:579.0px;width:98px;font-size:12.5px;color:#484848;line-height:16px">40.00h</div>
<div class="a cell" style="left:1543px;top:579.0px;width:100px;font-size:12.5px;color:#484848;line-height:16px">40.00h</div>
<div class="a" style="left:364px;top:628px;width:1279px;height:1px;background:#e3e3e3"></div>
<div class="a" style="left:364px;top:601px;width:1px;height:27px;background:#e3e3e3"></div>
<div class="a" style="left:829px;top:601px;width:1px;height:27px;background:#e3e3e3"></div>
<div class="a" style="left:870px;top:601px;width:1px;height:27px;background:#e3e3e3"></div>
<div class="a" style="left:954px;top:601px;width:1px;height:27px;background:#e3e3e3"></div>
<div class="a" style="left:1052px;top:601px;width:1px;height:27px;background:#e3e3e3"></div>
<div class="a" style="left:1150px;top:601px;width:1px;height:27px;background:#e3e3e3"></div>
<div class="a" style="left:1248px;top:601px;width:1px;height:27px;background:#e3e3e3"></div>
<div class="a" style="left:1347px;top:601px;width:1px;height:27px;background:#e3e3e3"></div>
<div class="a" style="left:1445px;top:601px;width:1px;height:27px;background:#e3e3e3"></div>
<div class="a" style="left:1543px;top:601px;width:1px;height:27px;background:#e3e3e3"></div>
<div class="a" style="left:400px;top:609.5px;width:0;height:0;border-top:5px solid transparent;border-bottom:5px solid transparent;border-left:6px solid #6b6f73"></div>
<div class="a" style="left:440px;top:607.5px;font-size:12.3px;color:#484848;white-space:nowrap;line-height:16px">Project Supervision (Project)</div>
<svg class="a" style="left:843px;top:607.5px" width="15" height="15" viewBox="0 0 15 15"><path d="M6.9 13 L1 13 L1 1 L13 1 L13 6.8" fill="none" stroke="#5b6570" stroke-width="1.7" stroke-linejoin="round"/><rect x="3.1" y="3.2" width="7.7" height="1.6" fill="#5b6570"/><rect x="3.1" y="6.2" width="3.8" height="1.5" fill="#5b6570"/><rect x="3.1" y="9.2" width="2.6" height="1.3" fill="#5b6570"/><circle cx="10" cy="9.9" r="2.1" fill="none" stroke="#5b6570" stroke-width="1.6"/><path d="M11.5 11.5 L13.6 13.6" stroke="#5b6570" stroke-width="1.7" stroke-linecap="round"/></svg>
<div class="a cell" style="left:1347px;top:607.0px;width:98px;font-size:12.5px;color:#484848;line-height:16px">80.00h</div>
<div class="a cell" style="left:1543px;top:607.0px;width:100px;font-size:12.5px;color:#484848;line-height:16px">80.00h</div>
<div class="a" style="left:364px;top:656px;width:1279px;height:1px;background:#e3e3e3"></div>
<div class="a" style="left:364px;top:629px;width:1px;height:27px;background:#e3e3e3"></div>
<div class="a" style="left:829px;top:629px;width:1px;height:27px;background:#e3e3e3"></div>
<div class="a" style="left:870px;top:629px;width:1px;height:27px;background:#e3e3e3"></div>
<div class="a" style="left:954px;top:629px;width:1px;height:27px;background:#e3e3e3"></div>
<div class="a" style="left:1052px;top:629px;width:1px;height:27px;background:#e3e3e3"></div>
<div class="a" style="left:1150px;top:629px;width:1px;height:27px;background:#e3e3e3"></div>
<div class="a" style="left:1248px;top:629px;width:1px;height:27px;background:#e3e3e3"></div>
<div class="a" style="left:1347px;top:629px;width:1px;height:27px;background:#e3e3e3"></div>
<div class="a" style="left:1445px;top:629px;width:1px;height:27px;background:#e3e3e3"></div>
<div class="a" style="left:1543px;top:629px;width:1px;height:27px;background:#e3e3e3"></div>
<div class="a" style="left:400px;top:637.5px;width:0;height:0;border-top:5px solid transparent;border-bottom:5px solid transparent;border-left:6px solid #6b6f73"></div>
<div class="a" style="left:440px;top:635.5px;font-size:12.3px;color:#484848;white-space:nowrap;line-height:16px">Project Terravision (Project)</div>
<svg class="a" style="left:843px;top:635.5px" width="15" height="15" viewBox="0 0 15 15"><path d="M6.9 13 L1 13 L1 1 L13 1 L13 6.8" fill="none" stroke="#5b6570" stroke-width="1.7" stroke-linejoin="round"/><rect x="3.1" y="3.2" width="7.7" height="1.6" fill="#5b6570"/><rect x="3.1" y="6.2" width="3.8" height="1.5" fill="#5b6570"/><rect x="3.1" y="9.2" width="2.6" height="1.3" fill="#5b6570"/><circle cx="10" cy="9.9" r="2.1" fill="none" stroke="#5b6570" stroke-width="1.6"/><path d="M11.5 11.5 L13.6 13.6" stroke="#5b6570" stroke-width="1.7" stroke-linecap="round"/></svg>
<div class="a cell" style="left:1445px;top:635.0px;width:98px;font-size:12.5px;color:#484848;line-height:16px">6.00h</div>
<div class="a cell" style="left:1543px;top:635.0px;width:100px;font-size:12.5px;color:#484848;line-height:16px">6.00h</div>
<div class="a" style="left:364px;top:657px;width:1279px;height:55px;background:#f3f3f3"></div>
<div class="a" style="left:364px;top:712px;width:1279px;height:1px;background:#cfcfcf"></div>
<div class="a" style="left:364px;top:657px;width:1px;height:55px;background:#e3e3e3"></div>
<div class="a" style="left:401px;top:666px;font-size:13.5px;color:#333;white-space:nowrap;line-height:16px">Gray, Tina</div>
<div class="a tri" style="left:385px;top:697px;border-top-color:#6b6f73"></div>
<svg class="a" style="left:842px;top:665px" width="15" height="15" viewBox="0 0 15 15"><path d="M6.9 13 L1 13 L1 1 L13 1 L13 6.8" fill="none" stroke="#5b6570" stroke-width="1.7" stroke-linejoin="round"/><rect x="3.1" y="3.2" width="7.7" height="1.6" fill="#5b6570"/><rect x="3.1" y="6.2" width="3.8" height="1.5" fill="#5b6570"/><rect x="3.1" y="9.2" width="2.6" height="1.3" fill="#5b6570"/><circle cx="10" cy="9.9" r="2.1" fill="none" stroke="#5b6570" stroke-width="1.6"/><path d="M11.5 11.5 L13.6 13.6" stroke="#5b6570" stroke-width="1.7" stroke-linecap="round"/></svg>
<div class="a" style="left:870px;top:664px;width:79px;text-align:right;font-size:13.5px;color:#333;line-height:16px">Total</div>
<div class="a" style="left:870px;top:691px;width:79px;text-align:right;font-size:13px;color:#666;line-height:16px">Available</div>
<div class="a cell" style="left:954px;top:664px;width:85px;font-size:13.5px;color:#333;line-height:16px">178.95h</div>
<div class="a" style="left:1039px;top:657px;width:13px;height:28px;background:#dff5dc"><svg width="13" height="28" viewBox="0 0 13 28" style="position:absolute;left:0;top:0"><path d="M1.5 14 L4.8 17.3 L11.8 10.5" fill="none" stroke="#2aa81a" stroke-width="2.5"/></svg></div>
<div class="a cell" style="left:1052px;top:664px;width:85px;font-size:13.5px;color:#333;line-height:16px">174.90h</div>
<div class="a" style="left:1137px;top:657px;width:13px;height:28px;background:#dff5dc"><svg width="13" height="28" viewBox="0 0 13 28" style="position:absolute;left:0;top:0"><path d="M1.5 14 L4.8 17.3 L11.8 10.5" fill="none" stroke="#2aa81a" stroke-width="2.5"/></svg></div>
<div class="a cell" style="left:1150px;top:664px;width:85px;font-size:13.5px;color:#333;line-height:16px">182.00h</div>
<div class="a" style="left:1235px;top:657px;width:13px;height:28px;background:#dff5dc"><svg width="13" height="28" viewBox="0 0 13 28" style="position:absolute;left:0;top:0"><path d="M1.5 14 L4.8 17.3 L11.8 10.5" fill="none" stroke="#2aa81a" stroke-width="2.5"/></svg></div>
<div class="a cell" style="left:1248px;top:664px;width:86px;font-size:13.5px;color:#333;line-height:16px">182.00h</div>
<div class="a" style="left:1334px;top:657px;width:13px;height:28px;background:#dff5dc"><svg width="13" height="28" viewBox="0 0 13 28" style="position:absolute;left:0;top:0"><path d="M1.5 14 L4.8 17.3 L11.8 10.5" fill="none" stroke="#2aa81a" stroke-width="2.5"/></svg></div>
<div class="a cell" style="left:1347px;top:664px;width:85px;font-size:13.5px;color:#333;line-height:16px">177.00h</div>
<div class="a" style="left:1432px;top:657px;width:13px;height:28px;background:#dff5dc"><svg width="13" height="28" viewBox="0 0 13 28" style="position:absolute;left:0;top:0"><path d="M1.5 14 L4.8 17.3 L11.8 10.5" fill="none" stroke="#2aa81a" stroke-width="2.5"/></svg></div>
<div class="a cell" style="left:1445px;top:664px;width:85px;font-size:13.5px;color:#333;line-height:16px">199.00h</div>
<div class="a" style="left:1530px;top:657px;width:13px;height:28px;background:#dff5dc"><svg width="13" height="28" viewBox="0 0 13 28" style="position:absolute;left:0;top:0"><path d="M1.5 14 L4.8 17.3 L11.8 10.5" fill="none" stroke="#2aa81a" stroke-width="2.5"/></svg></div>
<div class="a cell" style="left:1543px;top:664px;width:100px;font-size:13.5px;color:#333;line-height:16px">1,093.85h</div>
<div class="a cell" style="left:954px;top:691px;width:98px;font-size:12.5px;color:#666;line-height:16px">184.00h</div>
<div class="a cell" style="left:1052px;top:691px;width:98px;font-size:12.5px;color:#666;line-height:16px">168.00h</div>
<div class="a cell" style="left:1150px;top:691px;width:98px;font-size:12.5px;color:#666;line-height:16px">176.00h</div>
<div class="a cell" style="left:1248px;top:691px;width:99px;font-size:12.5px;color:#666;line-height:16px">176.00h</div>
<div class="a cell" style="left:1347px;top:691px;width:98px;font-size:12.5px;color:#666;line-height:16px">168.00h</div>
<div class="a cell" style="left:1445px;top:691px;width:98px;font-size:12.5px;color:#666;line-height:16px">184.00h</div>
<div class="a cell" style="left:1543px;top:691px;width:100px;font-size:12.5px;color:#666;line-height:16px">1,056.00h</div>
<div class="a" style="left:364px;top:741px;width:1279px;height:1px;background:#e3e3e3"></div>
<div class="a" style="left:364px;top:713px;width:1px;height:28px;background:#e3e3e3"></div>
<div class="a" style="left:829px;top:713px;width:1px;height:28px;background:#e3e3e3"></div>
<div class="a" style="left:870px;top:713px;width:1px;height:28px;background:#e3e3e3"></div>
<div class="a" style="left:954px;top:713px;width:1px;height:28px;background:#e3e3e3"></div>
<div class="a" style="left:1052px;top:713px;width:1px;height:28px;background:#e3e3e3"></div>
<div class="a" style="left:1150px;top:713px;width:1px;height:28px;background:#e3e3e3"></div>
<div class="a" style="left:1248px;top:713px;width:1px;height:28px;background:#e3e3e3"></div>
<div class="a" style="left:1347px;top:713px;width:1px;height:28px;background:#e3e3e3"></div>
<div class="a" style="left:1445px;top:713px;width:1px;height:28px;background:#e3e3e3"></div>
<div class="a" style="left:1543px;top:713px;width:1px;height:28px;background:#e3e3e3"></div>
<div class="a" style="left:400px;top:722.0px;width:0;height:0;border-top:5px solid transparent;border-bottom:5px solid transparent;border-left:6px solid #6b6f73"></div>
<div class="a" style="left:440px;top:720.0px;font-size:12.3px;color:#484848;white-space:nowrap;line-height:16px">Accounting System Migration (Project)</div>
<svg class="a" style="left:843px;top:720.0px" width="15" height="15" viewBox="0 0 15 15"><path d="M6.9 13 L1 13 L1 1 L13 1 L13 6.8" fill="none" stroke="#5b6570" stroke-width="1.7" stroke-linejoin="round"/><rect x="3.1" y="3.2" width="7.7" height="1.6" fill="#5b6570"/><rect x="3.1" y="6.2" width="3.8" height="1.5" fill="#5b6570"/><rect x="3.1" y="9.2" width="2.6" height="1.3" fill="#5b6570"/><circle cx="10" cy="9.9" r="2.1" fill="none" stroke="#5b6570" stroke-width="1.6"/><path d="M11.5 11.5 L13.6 13.6" stroke="#5b6570" stroke-width="1.7" stroke-linecap="round"/></svg>
<div class="a cell" style="left:954px;top:719.5px;width:98px;font-size:12.5px;color:#484848;line-height:16px">14.95h</div>
<div class="a cell" style="left:1052px;top:719.5px;width:98px;font-size:12.5px;color:#484848;line-height:16px">18.90h</div>
<div class="a cell" style="left:1150px;top:719.5px;width:98px;font-size:12.5px;color:#484848;line-height:16px">22.00h</div>
<div class="a cell" style="left:1248px;top:719.5px;width:99px;font-size:12.5px;color:#484848;line-height:16px">22.00h</div>
<div class="a cell" style="left:1347px;top:719.5px;width:98px;font-size:12.5px;color:#484848;line-height:16px">21.00h</div>
<div class="a cell" style="left:1445px;top:719.5px;width:98px;font-size:12.5px;color:#484848;line-height:16px">23.00h</div>
<div class="a cell" style="left:1543px;top:719.5px;width:100px;font-size:12.5px;color:#484848;line-height:16px">121.85h</div>
<div class="a" style="left:364px;top:769px;width:1279px;height:1px;background:#e3e3e3"></div>
<div class="a" style="left:364px;top:742px;width:1px;height:27px;background:#e3e3e3"></div>
<div class="a" style="left:829px;top:742px;width:1px;height:27px;background:#e3e3e3"></div>
<div class="a" style="left:870px;top:742px;width:1px;height:27px;background:#e3e3e3"></div>
<div class="a" style="left:954px;top:742px;width:1px;height:27px;background:#e3e3e3"></div>
<div class="a" style="left:1052px;top:742px;width:1px;height:27px;background:#e3e3e3"></div>
<div class="a" style="left:1150px;top:742px;width:1px;height:27px;background:#e3e3e3"></div>
<div class="a" style="left:1248px;top:742px;width:1px;height:27px;background:#e3e3e3"></div>
<div class="a" style="left:1347px;top:742px;width:1px;height:27px;background:#e3e3e3"></div>
<div class="a" style="left:1445px;top:742px;width:1px;height:27px;background:#e3e3e3"></div>
<div class="a" style="left:1543px;top:742px;width:1px;height:27px;background:#e3e3e3"></div>
<div class="a" style="left:400px;top:750.5px;width:0;height:0;border-top:5px solid transparent;border-bottom:5px solid transparent;border-left:6px solid #6b6f73"></div>
<div class="a" style="left:440px;top:748.5px;font-size:12.3px;color:#484848;white-space:nowrap;line-height:16px">New Intranet Site (Project)</div>
<svg class="a" style="left:843px;top:748.5px" width="15" height="15" viewBox="0 0 15 15"><path d="M6.9 13 L1 13 L1 1 L13 1 L13 6.8" fill="none" stroke="#5b6570" stroke-width="1.7" stroke-linejoin="round"/><rect x="3.1" y="3.2" width="7.7" height="1.6" fill="#5b6570"/><rect x="3.1" y="6.2" width="3.8" height="1.5" fill="#5b6570"/><rect x="3.1" y="9.2" width="2.6" height="1.3" fill="#5b6570"/><circle cx="10" cy="9.9" r="2.1" fill="none" stroke="#5b6570" stroke-width="1.6"/><path d="M11.5 11.5 L13.6 13.6" stroke="#5b6570" stroke-width="1.7" stroke-linecap="round"/></svg>
<div class="a cell" style="left:954px;top:748.0px;width:98px;font-size:12.5px;color:#484848;line-height:16px">92.00h</div>
<div class="a cell" style="left:1052px;top:748.0px;width:98px;font-size:12.5px;color:#484848;line-height:16px">84.00h</div>
<div class="a cell" style="left:1150px;top:748.0px;width:98px;font-size:12.5px;color:#484848;line-height:16px">88.00h</div>
<div class="a cell" style="left:1248px;top:748.0px;width:99px;font-size:12.5px;color:#484848;line-height:16px">88.00h</div>
<div class="a cell" style="left:1347px;top:748.0px;width:98px;font-size:12.5px;color:#484848;line-height:16px">84.00h</div>
<div class="a cell" style="left:1543px;top:748.0px;width:100px;font-size:12.5px;color:#484848;line-height:16px">436.00h</div>
<div class="a" style="left:364px;top:797px;width:1279px;height:1px;background:#e3e3e3"></div>
<div class="a" style="left:364px;top:770px;width:1px;height:27px;background:#e3e3e3"></div>
<div class="a" style="left:829px;top:770px;width:1px;height:27px;background:#e3e3e3"></div>
<div class="a" style="left:870px;top:770px;width:1px;height:27px;background:#e3e3e3"></div>
<div class="a" style="left:954px;top:770px;width:1px;height:27px;background:#e3e3e3"></div>
<div class="a" style="left:1052px;top:770px;width:1px;height:27px;background:#e3e3e3"></div>
<div class="a" style="left:1150px;top:770px;width:1px;height:27px;background:#e3e3e3"></div>
<div class="a" style="left:1248px;top:770px;width:1px;height:27px;background:#e3e3e3"></div>
<div class="a" style="left:1347px;top:770px;width:1px;height:27px;background:#e3e3e3"></div>
<div class="a" style="left:1445px;top:770px;width:1px;height:27px;background:#e3e3e3"></div>
<div class="a" style="left:1543px;top:770px;width:1px;height:27px;background:#e3e3e3"></div>
<div class="a" style="left:400px;top:778.5px;width:0;height:0;border-top:5px solid transparent;border-bottom:5px solid transparent;border-left:6px solid #6b6f73"></div>
<div class="a" style="left:440px;top:776.5px;font-size:12.3px;color:#484848;white-space:nowrap;line-height:16px">Xerath implementation (Project)</div>
<svg class="a" style="left:843px;top:776.5px" width="15" height="15" viewBox="0 0 15 15"><path d="M6.9 13 L1 13 L1 1 L13 1 L13 6.8" fill="none" stroke="#5b6570" stroke-width="1.7" stroke-linejoin="round"/><rect x="3.1" y="3.2" width="7.7" height="1.6" fill="#5b6570"/><rect x="3.1" y="6.2" width="3.8" height="1.5" fill="#5b6570"/><rect x="3.1" y="9.2" width="2.6" height="1.3" fill="#5b6570"/><circle cx="10" cy="9.9" r="2.1" fill="none" stroke="#5b6570" stroke-width="1.6"/><path d="M11.5 11.5 L13.6 13.6" stroke="#5b6570" stroke-width="1.7" stroke-linecap="round"/></svg>
<div class="a cell" style="left:954px;top:776.0px;width:98px;font-size:12.5px;color:#484848;line-height:16px">72.00h</div>
<div class="a cell" style="left:1052px;top:776.0px;width:98px;font-size:12.5px;color:#484848;line-height:16px">72.00h</div>
<div class="a cell" style="left:1150px;top:776.0px;width:98px;font-size:12.5px;color:#484848;line-height:16px">72.00h</div>
<div class="a cell" style="left:1248px;top:776.0px;width:99px;font-size:12.5px;color:#484848;line-height:16px">72.00h</div>
<div class="a cell" style="left:1347px;top:776.0px;width:98px;font-size:12.5px;color:#484848;line-height:16px">72.00h</div>
<div class="a cell" style="left:1445px;top:776.0px;width:98px;font-size:12.5px;color:#484848;line-height:16px">176.00h</div>
<div class="a cell" style="left:1543px;top:776.0px;width:100px;font-size:12.5px;color:#484848;line-height:16px">536.00h</div>
<div class="a" style="left:364px;top:798px;width:1279px;height:55px;background:#f3f3f3"></div>
<div class="a" style="left:364px;top:853px;width:1279px;height:1px;background:#cfcfcf"></div>
<div class="a" style="left:364px;top:798px;width:1px;height:55px;background:#e3e3e3"></div>
<div class="a" style="left:401px;top:807px;font-size:13.5px;color:#333;white-space:nowrap;line-height:16px">Mitchell, William</div>
<div class="a tri" style="left:385px;top:838px;border-top-color:#6b6f73"></div>
<svg class="a" style="left:842px;top:806px" width="15" height="15" viewBox="0 0 15 15"><path d="M6.9 13 L1 13 L1 1 L13 1 L13 6.8" fill="none" stroke="#5b6570" stroke-width="1.7" stroke-linejoin="round"/><rect x="3.1" y="3.2" width="7.7" height="1.6" fill="#5b6570"/><rect x="3.1" y="6.2" width="3.8" height="1.5" fill="#5b6570"/><rect x="3.1" y="9.2" width="2.6" height="1.3" fill="#5b6570"/><circle cx="10" cy="9.9" r="2.1" fill="none" stroke="#5b6570" stroke-width="1.6"/><path d="M11.5 11.5 L13.6 13.6" stroke="#5b6570" stroke-width="1.7" stroke-linecap="round"/></svg>
<div class="a" style="left:870px;top:805px;width:79px;text-align:right;font-size:13.5px;color:#333;line-height:16px">Total</div>
<div class="a" style="left:870px;top:832px;width:79px;text-align:right;font-size:13px;color:#666;line-height:16px">Available</div>
<div class="a cell" style="left:954px;top:805px;width:85px;font-size:13.5px;color:#333;line-height:16px">153.65h</div>
<div class="a" style="left:1039px;top:798px;width:13px;height:28px;background:#fdeaca"><svg width="13" height="28" viewBox="0 0 13 28" style="position:absolute;left:0;top:0"><path d="M6.7 6.3 L6.7 18" stroke="#f46b1c" stroke-width="3" stroke-linecap="round"/><path d="M1.5 17.3 L6.7 23.8 L12 17.3 Z" fill="#f46b1c"/></svg></div>
<div class="a cell" style="left:1052px;top:805px;width:85px;font-size:13.5px;color:#333;line-height:16px">114.30h</div>
<div class="a" style="left:1137px;top:798px;width:13px;height:28px;background:#fdeaca"><svg width="13" height="28" viewBox="0 0 13 28" style="position:absolute;left:0;top:0"><path d="M6.7 6.3 L6.7 18" stroke="#f46b1c" stroke-width="3" stroke-linecap="round"/><path d="M1.5 17.3 L6.7 23.8 L12 17.3 Z" fill="#f46b1c"/></svg></div>
<div class="a cell" style="left:1150px;top:805px;width:85px;font-size:13.5px;color:#333;line-height:16px">102.80h</div>
<div class="a" style="left:1235px;top:798px;width:13px;height:28px;background:#fdeaca"><svg width="13" height="28" viewBox="0 0 13 28" style="position:absolute;left:0;top:0"><path d="M6.7 6.3 L6.7 18" stroke="#f46b1c" stroke-width="3" stroke-linecap="round"/><path d="M1.5 17.3 L6.7 23.8 L12 17.3 Z" fill="#f46b1c"/></svg></div>
<div class="a cell" style="left:1248px;top:805px;width:86px;font-size:13.5px;color:#333;line-height:16px">102.80h</div>
<div class="a" style="left:1334px;top:798px;width:13px;height:28px;background:#fdeaca"><svg width="13" height="28" viewBox="0 0 13 28" style="position:absolute;left:0;top:0"><path d="M6.7 6.3 L6.7 18" stroke="#f46b1c" stroke-width="3" stroke-linecap="round"/><path d="M1.5 17.3 L6.7 23.8 L12 17.3 Z" fill="#f46b1c"/></svg></div>
<div class="a cell" style="left:1347px;top:805px;width:85px;font-size:13.5px;color:#333;line-height:16px">101.40h</div>
<div class="a" style="left:1432px;top:798px;width:13px;height:28px;background:#fdeaca"><svg width="13" height="28" viewBox="0 0 13 28" style="position:absolute;left:0;top:0"><path d="M6.7 6.3 L6.7 18" stroke="#f46b1c" stroke-width="3" stroke-linecap="round"/><path d="M1.5 17.3 L6.7 23.8 L12 17.3 Z" fill="#f46b1c"/></svg></div>
<div class="a cell" style="left:1445px;top:805px;width:85px;font-size:13.5px;color:#333;line-height:16px">180.00h</div>
<div class="a" style="left:1530px;top:798px;width:13px;height:28px;background:#dff5dc"><svg width="13" height="28" viewBox="0 0 13 28" style="position:absolute;left:0;top:0"><path d="M1.5 14 L4.8 17.3 L11.8 10.5" fill="none" stroke="#2aa81a" stroke-width="2.5"/></svg></div>
<div class="a cell" style="left:1543px;top:805px;width:100px;font-size:13.5px;color:#333;line-height:16px">754.95h</div>
<div class="a cell" style="left:954px;top:832px;width:98px;font-size:12.5px;color:#666;line-height:16px">184.00h</div>
<div class="a cell" style="left:1052px;top:832px;width:98px;font-size:12.5px;color:#666;line-height:16px">168.00h</div>
<div class="a cell" style="left:1150px;top:832px;width:98px;font-size:12.5px;color:#666;line-height:16px">176.00h</div>
<div class="a cell" style="left:1248px;top:832px;width:99px;font-size:12.5px;color:#666;line-height:16px">176.00h</div>
<div class="a cell" style="left:1347px;top:832px;width:98px;font-size:12.5px;color:#666;line-height:16px">168.00h</div>
<div class="a cell" style="left:1445px;top:832px;width:98px;font-size:12.5px;color:#666;line-height:16px">184.00h</div>
<div class="a cell" style="left:1543px;top:832px;width:100px;font-size:12.5px;color:#666;line-height:16px">1,056.00h</div>
<div class="a" style="left:364px;top:881px;width:1279px;height:1px;background:#e3e3e3"></div>
<div class="a" style="left:364px;top:854px;width:1px;height:27px;background:#e3e3e3"></div>
<div class="a" style="left:829px;top:854px;width:1px;height:27px;background:#e3e3e3"></div>
<div class="a" style="left:870px;top:854px;width:1px;height:27px;background:#e3e3e3"></div>
<div class="a" style="left:954px;top:854px;width:1px;height:27px;background:#e3e3e3"></div>
<div class="a" style="left:1052px;top:854px;width:1px;height:27px;background:#e3e3e3"></div>
<div class="a" style="left:1150px;top:854px;width:1px;height:27px;background:#e3e3e3"></div>
<div class="a" style="left:1248px;top:854px;width:1px;height:27px;background:#e3e3e3"></div>
<div class="a" style="left:1347px;top:854px;width:1px;height:27px;background:#e3e3e3"></div>
<div class="a" style="left:1445px;top:854px;width:1px;height:27px;background:#e3e3e3"></div>
<div class="a" style="left:1543px;top:854px;width:1px;height:27px;background:#e3e3e3"></div>
<div class="a" style="left:400px;top:862.5px;width:0;height:0;border-top:5px solid transparent;border-bottom:5px solid transparent;border-left:6px solid #6b6f73"></div>
<div class="a" style="left:440px;top:860.5px;font-size:12.3px;color:#484848;white-space:nowrap;line-height:16px">Accounting System Migration (Project)</div>
<svg class="a" style="left:843px;top:860.5px" width="15" height="15" viewBox="0 0 15 15"><path d="M6.9 13 L1 13 L1 1 L13 1 L13 6.8" fill="none" stroke="#5b6570" stroke-width="1.7" stroke-linejoin="round"/><rect x="3.1" y="3.2" width="7.7" height="1.6" fill="#5b6570"/><rect x="3.1" y="6.2" width="3.8" height="1.5" fill="#5b6570"/><rect x="3.1" y="9.2" width="2.6" height="1.3" fill="#5b6570"/><circle cx="10" cy="9.9" r="2.1" fill="none" stroke="#5b6570" stroke-width="1.6"/><path d="M11.5 11.5 L13.6 13.6" stroke="#5b6570" stroke-width="1.7" stroke-linecap="round"/></svg>
<div class="a cell" style="left:954px;top:860.0px;width:98px;font-size:12.5px;color:#484848;line-height:16px">72.45h</div>
<div class="a cell" style="left:1052px;top:860.0px;width:98px;font-size:12.5px;color:#484848;line-height:16px">33.90h</div>
<div class="a cell" style="left:1150px;top:860.0px;width:98px;font-size:12.5px;color:#484848;line-height:16px">22.00h</div>
<div class="a cell" style="left:1248px;top:860.0px;width:99px;font-size:12.5px;color:#484848;line-height:16px">22.00h</div>
<div class="a cell" style="left:1347px;top:860.0px;width:98px;font-size:12.5px;color:#484848;line-height:16px">21.00h</div>
<div class="a cell" style="left:1445px;top:860.0px;width:98px;font-size:12.5px;color:#484848;line-height:16px">23.00h</div>
<div class="a cell" style="left:1543px;top:860.0px;width:100px;font-size:12.5px;color:#484848;line-height:16px">194.35h</div>
<div class="a" style="left:364px;top:881px;width:1280px;height:20px;background:#fff"></div></div></body></html>
